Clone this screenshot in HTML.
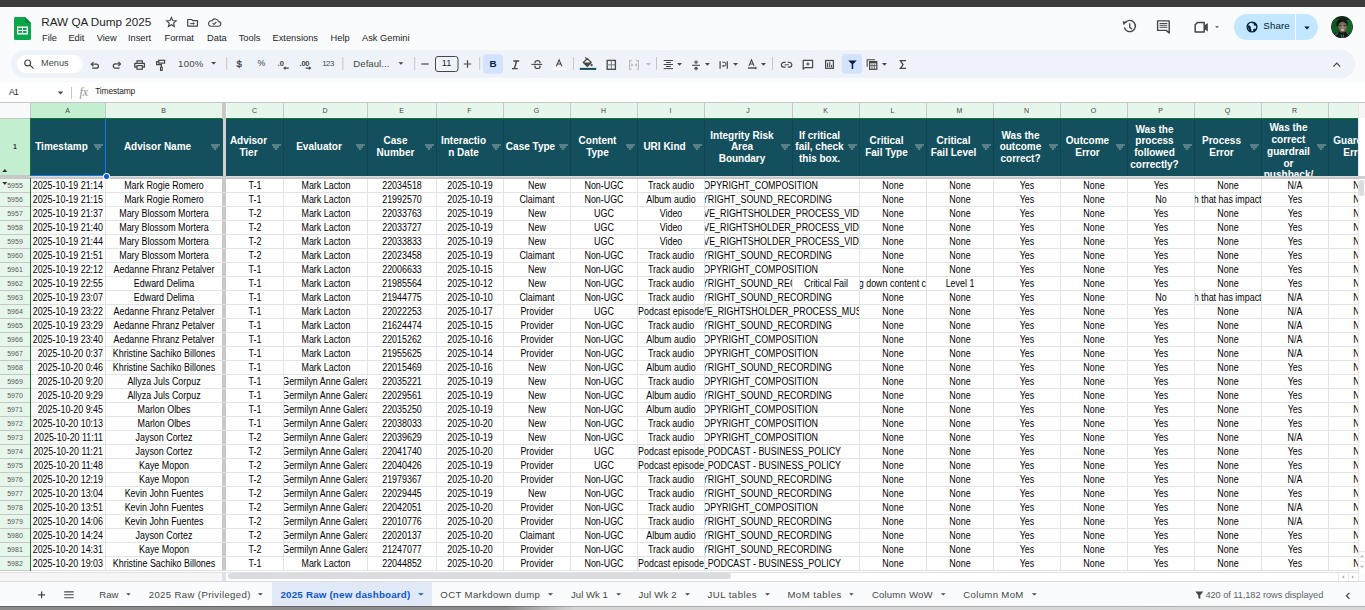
<!DOCTYPE html>
<html><head><meta charset="utf-8"><style>
html,body{margin:0;padding:0;}
body{width:1365px;height:610px;overflow:hidden;position:relative;background:#f9fbfd;font-family:"Liberation Sans", sans-serif;}
body>div,body>svg{position:absolute;}
.t{white-space:pre;}
.k{position:absolute;height:13px;overflow:hidden;}
.d{position:absolute;white-space:pre;font-size:10px;line-height:10px;color:#000;transform:scaleX(0.89);}
.d.c{width:400px;text-align:center;}
.d.r{text-align:right;transform-origin:100% 0;}
.d.l{transform-origin:0 0;}
</style></head><body>
<div style="left:0px;top:0px;width:1365px;height:7px;background:#3c3c3c;"></div><svg style="position:absolute;left:14px;top:17px" width="17" height="23" viewBox="0 0 17 23">
<path d="M1.5 0H11L17 6V21.5A1.5 1.5 0 0 1 15.5 23H1.5A1.5 1.5 0 0 1 0 21.5V1.5A1.5 1.5 0 0 1 1.5 0Z" fill="#0aa84a"/>
<path d="M11 0L17 6H12.2A1.2 1.2 0 0 1 11 4.8Z" fill="#068a3a"/>
<rect x="3" y="9.5" width="11" height="8" fill="#fff"/>
<rect x="4.4" y="10.9" width="3.6" height="2.1" fill="#0aa84a"/>
<rect x="9" y="10.9" width="3.6" height="2.1" fill="#0aa84a"/>
<rect x="4.4" y="14" width="3.6" height="2.1" fill="#0aa84a"/>
<rect x="9" y="14" width="3.6" height="2.1" fill="#0aa84a"/>
</svg><div class="t" style="left:41.3px;top:15.90px;font-size:11.7px;line-height:11.7px;color:#1f1f1f;font-weight:normal;">RAW QA Dump 2025</div><svg style="position:absolute;left:165px;top:16px" width="60" height="13" viewBox="0 0 60 13">
<path d="M6.40 1.40L7.75 4.54L11.16 4.85L8.59 7.11L9.34 10.45L6.40 8.70L3.46 10.45L4.21 7.11L1.64 4.85L5.05 4.54Z" fill="none" stroke="#444746" stroke-width="1.15" stroke-linejoin="miter"/>
<path d="M22.7 3.5H26.6L27.8 4.6H32.5V10.1H22.7Z" fill="none" stroke="#444746" stroke-width="1.2" stroke-linejoin="round"/>
<path d="M25.2 7.6H28.8" stroke="#444746" stroke-width="1.1"/>
<path d="M28.2 6.1L30 7.6L28.2 9.1Z" fill="#444746"/>
<path d="M45.6 10.2H53.4A2.3 2.3 0 0 0 53.6 5.6A3.6 3.6 0 0 0 46.9 4.9A2.7 2.7 0 0 0 45.6 10.2Z" fill="none" stroke="#444746" stroke-width="1.1"/>
<path d="M47.6 7.1L49 8.4L51.4 5.9" fill="none" stroke="#444746" stroke-width="1.1"/>
</svg><div class="t" style="left:42px;top:33.73px;font-size:9.3px;line-height:9.3px;color:#1f1f1f;font-weight:normal;">File</div><div class="t" style="left:68.4px;top:33.73px;font-size:9.3px;line-height:9.3px;color:#1f1f1f;font-weight:normal;">Edit</div><div class="t" style="left:96.7px;top:33.73px;font-size:9.3px;line-height:9.3px;color:#1f1f1f;font-weight:normal;">View</div><div class="t" style="left:127.9px;top:33.73px;font-size:9.3px;line-height:9.3px;color:#1f1f1f;font-weight:normal;">Insert</div><div class="t" style="left:164.5px;top:33.73px;font-size:9.3px;line-height:9.3px;color:#1f1f1f;font-weight:normal;">Format</div><div class="t" style="left:207px;top:33.73px;font-size:9.3px;line-height:9.3px;color:#1f1f1f;font-weight:normal;">Data</div><div class="t" style="left:238.7px;top:33.73px;font-size:9.3px;line-height:9.3px;color:#1f1f1f;font-weight:normal;">Tools</div><div class="t" style="left:272.5px;top:33.73px;font-size:9.3px;line-height:9.3px;color:#1f1f1f;font-weight:normal;">Extensions</div><div class="t" style="left:330.6px;top:33.73px;font-size:9.3px;line-height:9.3px;color:#1f1f1f;font-weight:normal;">Help</div><div class="t" style="left:362px;top:33.73px;font-size:9.3px;line-height:9.3px;color:#1f1f1f;font-weight:normal;">Ask Gemini</div><svg style="position:absolute;left:1120px;top:17px" width="110" height="20" viewBox="0 0 110 20">
<path d="M5.3 5.6A5.6 5.6 0 1 1 4.3 10.3" fill="none" stroke="#444746" stroke-width="1.4"/>
<path d="M2.6 4.2L6.9 4.8L3.6 8.2Z" fill="#444746"/>
<path d="M9.7 6.2V10.1L12 12.3" fill="none" stroke="#444746" stroke-width="1.3"/>
<path d="M37.6 3.9H49.2V16L46.2 13.4H37.6Z" fill="none" stroke="#444746" stroke-width="1.4" stroke-linejoin="round"/>
<path d="M39.5 6.5H47.3M39.5 8.3H47.3M39.5 10.3H47.3" stroke="#444746" stroke-width="1"/>
<path d="M77.4 5.6H84.2V15H75.2V7.8Z" fill="none" stroke="#444746" stroke-width="1.5" stroke-linejoin="round"/>
<path d="M84.2 8.6L87.8 5.9V14.6L84.2 12Z" fill="#444746"/>
<path d="M95 9.2H99L97 10.9Z" fill="#444746"/>
</svg><div style="left:1234px;top:14px;width:84px;height:26px;border-radius:13px;background:#c2e7ff"></div><div style="left:1295px;top:14px;width:1px;height:26px;background:#f9fbfd;"></div><svg style="position:absolute;left:1246px;top:21px" width="12" height="12" viewBox="0 0 12 12">
<circle cx="6" cy="6" r="4.9" fill="none" stroke="#001d35" stroke-width="1.3"/>
<path d="M1.6 4.4L3.4 4.6L5 6.3L4.6 7.6L5.4 8.6V11L3 9.6L2.2 6.8Z" fill="#001d35"/>
<path d="M5.6 1.2L6.6 2.6L8.2 2.8L7.6 4.4L9.6 4.6L10.6 6.4L10.8 3.6L8.8 1.6Z" fill="#001d35"/>
<path d="M7.2 8.2L9 7.4L10.4 8L8.6 10.4L7.4 10.8Z" fill="#001d35"/>
</svg><div class="t" style="left:1263.308px;top:21.10px;font-size:9.8px;line-height:9.8px;color:#001d35;font-weight:500;letter-spacing:0.058px;">Share</div><svg style="position:absolute;left:1304px;top:26px" width="6" height="4" viewBox="0 0 6 4"><path d="M0.3 0.5H5.7L3 3.5Z" fill="#001d35"/></svg><svg style="position:absolute;left:1331px;top:16px" width="22" height="22" viewBox="0 0 22 22">
<defs><clipPath id="av"><circle cx="11" cy="11" r="10.9"/></clipPath>
<radialGradient id="fg" cx="0.5" cy="0.45" r="0.6"><stop offset="0" stop-color="#a08f7e"/><stop offset="0.7" stop-color="#6e5f52"/><stop offset="1" stop-color="#3a2f28"/></radialGradient></defs>
<g clip-path="url(#av)">
<rect width="22" height="22" fill="#10241a"/>
<rect x="1" y="3" width="6.5" height="14" fill="#0e5a1e"/>
<rect x="15" y="4" width="6" height="13" fill="#0f6a24"/>
<path d="M5.5 6C6.5 2.6 15.5 2.6 16.5 6V10H5.5Z" fill="#111"/>
<ellipse cx="11.6" cy="11.4" rx="4.6" ry="5.8" fill="url(#fg)"/>
<path d="M8.4 9.6H10.8M12.4 9.6H14.8" stroke="#2a2a2a" stroke-width="0.9"/>
<path d="M10.2 13.6Q11.6 14.8 13 13.6" stroke="#e8e4dc" stroke-width="1.2" fill="none"/>
<path d="M0 22C1 18 5 16.5 11 16.5C17 16.5 21 18 22 22Z" fill="#1a1512"/>
<path d="M4 19L7 17.5M16 17.5L19 19" stroke="#3a8fa0" stroke-width="1"/>
<path d="M10 18.5L11 22M12.5 18.5L12 22" stroke="#1d8a6a" stroke-width="1"/>
</g></svg><div style="left:11px;top:50px;width:1344px;height:28px;border-radius:14px;background:#eef2f9"></div><div style="left:17px;top:55px;width:66px;height:18px;border-radius:9px;background:#fff"></div><svg style="position:absolute;left:0px;top:50px" width="920" height="28" viewBox="0 0 920 28">
<g fill="none" stroke="#444746">
<circle cx="27.7" cy="12.9" r="2.9" stroke-width="1.2"/><path d="M29.9 15.1L33.6 18.6" stroke-width="1.3"/>
<path d="M93.4 12.1L91.3 14.2L93.4 16.3" stroke-width="1.2"/><path d="M91.6 14.2H96.4A2 2 0 0 1 96.4 18.2H92.2" stroke-width="1.2"/>
<path d="M118.4 11.8L120.5 13.9L118.4 16" stroke-width="1.2"/><path d="M120.2 13.9H115.4A2.1 2.1 0 0 0 115.4 18.1H119.6" stroke-width="1.2"/>
<path d="M137 12.9V10.8H142.3V12.9" stroke-width="1.2"/><path d="M136.9 17.2H134.8V13.4H144.4V17.2H142.4" stroke-width="1.3" stroke-linejoin="round"/><rect x="137" y="15.6" width="5.3" height="3.6" stroke-width="1.2"/>
<rect x="158.7" y="10.3" width="5.9" height="2.8" stroke-width="1.2"/><path d="M158.7 11.7H156.6V14.7H161.3V17.2" stroke-width="1.2"/><rect x="160.5" y="17.4" width="1.7" height="3" stroke-width="1.1"/>
</g>
<path d="M211 12H216.2L213.6 14.6Z" fill="#444746"/>
<g fill="#c7c7c7">
<rect x="226.2" y="7" width="1" height="13"/>
<rect x="342.4" y="7" width="1" height="13"/>
<rect x="414.2" y="7" width="1" height="13"/>
<rect x="479.2" y="7" width="1" height="13"/>
<rect x="573" y="7" width="1" height="13"/>
<rect x="656" y="7" width="1" height="13"/>
<rect x="772" y="7" width="1" height="13"/>
</g>
<path d="M398.4 12.3H403.4L400.9 14.8Z" fill="#444746"/>
<path d="M421.3 14H428.7" stroke="#444746" stroke-width="1.2"/>
<rect x="435.5" y="6.5" width="22.5" height="15" rx="2.5" fill="none" stroke="#444746" stroke-width="1"/>
<path d="M463.8 14H471.2M467.5 10.3V17.7" stroke="#444746" stroke-width="1.2"/>
<rect x="483" y="4.2" width="20" height="19.6" rx="3.5" fill="#d3e3fd"/>
<rect x="842" y="4" width="20" height="19.8" rx="3.5" fill="#d3e3fd"/>
<path d="M513.4 11H519.2M512 18.6H517.6M516.6 11L514.4 18.6" stroke="#444746" stroke-width="1.4" fill="none"/>
<path d="M531.4 14.4H542.2" stroke="#444746" stroke-width="1.1"/>
<path d="M535 13.2V12.6A2.5 1.9 0 0 1 540 12.6V13.2M535 15.6V16.4A2.5 2.1 0 0 0 540 16.4V15.6" stroke="#444746" stroke-width="1.2" fill="none"/>
<path d="M556.4 16.2L559.1 9.9L561.8 16.2M557.4 14H560.8" stroke="#444746" stroke-width="1.1" fill="none"/>
<rect x="552" y="17.9" width="15" height="2" fill="#fff"/>
<path d="M585.2 7.4L587.6 9.8" stroke="#444746" stroke-width="1.1"/>
<path d="M583.3 12.5L587.3 8.5L591.3 12.5L587.3 16.5Z" fill="none" stroke="#444746" stroke-width="1.2"/>
<path d="M583.3 12.5H591.3L587.3 16.5Z" fill="#444746"/>
<circle cx="591.6" cy="15.2" r="1.1" fill="#444746"/>
<rect x="579.8" y="17.9" width="16.4" height="2" fill="#134f5c"/>
<rect x="607.2" y="10.4" width="8.2" height="8.9" fill="none" stroke="#444746" stroke-width="1.3"/>
<path d="M611.3 10.4V19.3M607.2 14.85H615.4" stroke="#777" stroke-width="1"/>
<g stroke="#b7b9bc" stroke-width="1.1" fill="none">
<path d="M631.7 10.6H629.6V19.2H631.7M636.3 10.6H638.4V19.2H636.3"/>
</g>
<path d="M631.2 13.3L633.6 15L631.2 16.7Z M637 13.3L634.6 15L637 16.7Z" fill="#b7b9bc"/>
<path d="M646 12.9H651L648.5 15.8Z" fill="#b7b9bc"/>
<g stroke="#444746" stroke-width="1">
<path d="M663.7 10.5H673M666 12.5H670.8M663.7 14.5H673M666 16.5H670.8M663.7 18.6H673"/>
</g>
<path d="M677.1 12.9H682L679.55 15.8Z" fill="#444746"/>
<path d="M692.1 15.3H700" stroke="#444746" stroke-width="1.1"/>
<path d="M696.05 10.2V12M694.3 11.6L696.05 13.3L697.8 11.6M696.05 20.4V18.6M694.3 19L696.05 17.3L697.8 19" stroke="#444746" stroke-width="1.1" fill="none"/>
<path d="M705 12.9H709.9L707.45 15.8Z" fill="#444746"/>
<g stroke="#444746" stroke-width="1.2" fill="none">
<path d="M720.1 11.2V18.8M727.3 11.2V18.8"/>
<path d="M722.2 12.2H724A1.9 1.9 0 0 1 724 16H722.9" stroke-width="1"/>
</g>
<path d="M723.6 14.8L721.9 16L723.6 17.2Z" fill="#444746"/>
<path d="M733 12.9H738.1L735.55 15.8Z" fill="#444746"/>
<g stroke="#444746" stroke-width="1.1" fill="none">
<path d="M749 15.9L751.55 10L754.1 15.9M749.9 14H753.2"/>
<path d="M748 18H755.6" stroke-width="1.4"/>
</g>
<path d="M755.2 16.4L757.2 18L755.2 19.6Z" fill="#444746"/>
<path d="M761 12.9H766L763.5 15.8Z" fill="#444746"/>
<g stroke="#444746" stroke-width="1.2" fill="none">
<path d="M785.6 12.4H783.8A2.4 2.4 0 0 0 783.8 17.2H785.6M787.8 12.4H789.4A2.4 2.4 0 0 1 789.4 17.2H787.8"/>
<path d="M784.6 14.8H788.8" stroke-width="1"/>
</g>
<g stroke="#444746" stroke-width="1.2" fill="none">
<path d="M803.2 19.2V10.4H812.6V17.6H804.8Z" stroke-linejoin="round"/>
<path d="M807.9 12.4V15.6M806.3 14H809.5"/>
<rect x="825.6" y="10.5" width="7.8" height="7.8"/>
<path d="M827.6 16.8V13.1M829.7 16.8V12.2M831.6 16.8V15.2" stroke-width="1.1" stroke-linecap="round"/>
</g>
<path d="M848.2 10.4H856.7L853.2 14V18.9H851.7V14Z" fill="#041e49"/>
<g stroke="#444746" fill="none">
<path d="M867.2 16.8V9.7H875.1" stroke-width="1.1"/>
<rect x="869.6" y="11.6" width="7.2" height="7.7" stroke-width="1.2"/>
<path d="M869.6 12.3H876.8" stroke-width="2.2"/>
<path d="M869.6 15.6H876.8M872 14V19.3M874.4 14V19.3" stroke-width="0.8"/>
</g>
<path d="M882 12.9H886.9L884.45 15.8Z" fill="#444746"/>
<path d="M905.4 11.3V10.7H900.4L903 14.8L900.4 18.3H905.4V17.7" stroke="#444746" stroke-width="1.3" fill="none"/>
</svg><div class="t" style="left:41.1px;top:59.11px;font-size:9.2px;line-height:9.2px;color:#474747;font-weight:normal;">Menus</div><div class="t" style="left:178.116px;top:59.47px;font-size:9.6px;line-height:9.6px;color:#444746;font-weight:normal;letter-spacing:0.238px;">100%</div><div class="t" style="left:236.6px;top:59.4px;font-size:9.6px;line-height:10px;color:#444746;font-weight:normal;-webkit-text-stroke:0.3px #444746">$</div><div class="t" style="left:257.6px;top:59.45px;font-size:8.8px;line-height:8.8px;color:#444746;font-weight:normal;">%</div><div class="t" style="left:353.316px;top:59.47px;font-size:9.6px;line-height:9.6px;color:#444746;font-weight:normal;letter-spacing:0.040px;">Defaul...</div><div class="t" style="left:146.60000000000002px;width:600px;text-align:center;top:59.41px;font-size:9.2px;line-height:9.2px;color:#1f1f1f;font-weight:normal;">11</div><div class="t" style="left:322.188px;top:60.30px;font-size:7.8px;line-height:7.8px;color:#444746;font-weight:normal;letter-spacing:-0.445px;">123</div><div class="t" style="left:489.6px;top:59.30px;font-size:9.8px;line-height:9.8px;color:#041e49;font-weight:bold;">B</div><svg style="position:absolute;left:270px;top:50px" width="50" height="28" viewBox="0 0 50 28">
<text x="7.6" y="15.8" font-family="Liberation Sans" font-size="7.6" fill="#444746" font-weight="bold">.0</text>
<path d="M14 18.1H18.8M15.5 16.8L14 18.1L15.5 19.4" stroke="#444746" stroke-width="1.1" fill="none"/>
<text x="29.6" y="15.8" font-family="Liberation Sans" font-size="7.6" fill="#444746" font-weight="bold" letter-spacing="-0.3">.00</text>
<path d="M35.7 18.1H40.6M39.1 16.8L40.6 18.1L39.1 19.4" stroke="#444746" stroke-width="1.1" fill="none"/>
</svg><svg style="position:absolute;left:1320px;top:50px" width="30" height="28" viewBox="0 0 30 28">
<path d="M13.4 16.6L16.8 13.2L20.2 16.6" stroke="#444746" stroke-width="1.2" fill="none"/>
</svg><div style="left:0px;top:83px;width:1365px;height:19px;background:#fff;"></div><div style="left:0px;top:102px;width:1365px;height:1px;background:#c7c7c7;"></div><div style="left:30px;top:119px;width:1328px;height:452px;background:#fff"></div><div style="left:0px;top:103px;width:30px;height:15px;background:#f8f9fa"></div><div style="left:31px;top:103px;width:74px;height:15px;background:#c4eed0"></div><div style="left:105px;top:103px;width:1px;height:15px;background:#c7c7c7"></div><div class="t" style="left:17.5px;width:100px;text-align:center;top:107.27px;font-size:7px;line-height:7px;color:#444">A</div><div style="left:106px;top:103px;width:116px;height:15px;background:#e6f6ea"></div><div style="left:222px;top:103px;width:1px;height:15px;background:#c7c7c7"></div><div class="t" style="left:113.5px;width:100px;text-align:center;top:107.27px;font-size:7px;line-height:7px;color:#444">B</div><div style="left:227px;top:103px;width:56px;height:15px;background:#e6f6ea"></div><div style="left:283px;top:103px;width:1px;height:15px;background:#c7c7c7"></div><div class="t" style="left:204.5px;width:100px;text-align:center;top:107.27px;font-size:7px;line-height:7px;color:#444">C</div><div style="left:284px;top:103px;width:83px;height:15px;background:#e6f6ea"></div><div style="left:367px;top:103px;width:1px;height:15px;background:#c7c7c7"></div><div class="t" style="left:275.0px;width:100px;text-align:center;top:107.27px;font-size:7px;line-height:7px;color:#444">D</div><div style="left:368px;top:103px;width:68px;height:15px;background:#e6f6ea"></div><div style="left:436px;top:103px;width:1px;height:15px;background:#c7c7c7"></div><div class="t" style="left:351.5px;width:100px;text-align:center;top:107.27px;font-size:7px;line-height:7px;color:#444">E</div><div style="left:437px;top:103px;width:66px;height:15px;background:#e6f6ea"></div><div style="left:503px;top:103px;width:1px;height:15px;background:#c7c7c7"></div><div class="t" style="left:419.5px;width:100px;text-align:center;top:107.27px;font-size:7px;line-height:7px;color:#444">F</div><div style="left:504px;top:103px;width:66px;height:15px;background:#e6f6ea"></div><div style="left:570px;top:103px;width:1px;height:15px;background:#c7c7c7"></div><div class="t" style="left:486.5px;width:100px;text-align:center;top:107.27px;font-size:7px;line-height:7px;color:#444">G</div><div style="left:571px;top:103px;width:66px;height:15px;background:#e6f6ea"></div><div style="left:637px;top:103px;width:1px;height:15px;background:#c7c7c7"></div><div class="t" style="left:553.5px;width:100px;text-align:center;top:107.27px;font-size:7px;line-height:7px;color:#444">H</div><div style="left:638px;top:103px;width:66px;height:15px;background:#e6f6ea"></div><div style="left:704px;top:103px;width:1px;height:15px;background:#c7c7c7"></div><div class="t" style="left:620.5px;width:100px;text-align:center;top:107.27px;font-size:7px;line-height:7px;color:#444">I</div><div style="left:705px;top:103px;width:87px;height:15px;background:#e6f6ea"></div><div style="left:792px;top:103px;width:1px;height:15px;background:#c7c7c7"></div><div class="t" style="left:698.0px;width:100px;text-align:center;top:107.27px;font-size:7px;line-height:7px;color:#444">J</div><div style="left:793px;top:103px;width:66px;height:15px;background:#e6f6ea"></div><div style="left:859px;top:103px;width:1px;height:15px;background:#c7c7c7"></div><div class="t" style="left:775.5px;width:100px;text-align:center;top:107.27px;font-size:7px;line-height:7px;color:#444">K</div><div style="left:860px;top:103px;width:66px;height:15px;background:#e6f6ea"></div><div style="left:926px;top:103px;width:1px;height:15px;background:#c7c7c7"></div><div class="t" style="left:842.5px;width:100px;text-align:center;top:107.27px;font-size:7px;line-height:7px;color:#444">L</div><div style="left:927px;top:103px;width:66px;height:15px;background:#e6f6ea"></div><div style="left:993px;top:103px;width:1px;height:15px;background:#c7c7c7"></div><div class="t" style="left:909.5px;width:100px;text-align:center;top:107.27px;font-size:7px;line-height:7px;color:#444">M</div><div style="left:994px;top:103px;width:66px;height:15px;background:#e6f6ea"></div><div style="left:1060px;top:103px;width:1px;height:15px;background:#c7c7c7"></div><div class="t" style="left:976.5px;width:100px;text-align:center;top:107.27px;font-size:7px;line-height:7px;color:#444">N</div><div style="left:1061px;top:103px;width:66px;height:15px;background:#e6f6ea"></div><div style="left:1127px;top:103px;width:1px;height:15px;background:#c7c7c7"></div><div class="t" style="left:1043.5px;width:100px;text-align:center;top:107.27px;font-size:7px;line-height:7px;color:#444">O</div><div style="left:1128px;top:103px;width:66px;height:15px;background:#e6f6ea"></div><div style="left:1194px;top:103px;width:1px;height:15px;background:#c7c7c7"></div><div class="t" style="left:1110.5px;width:100px;text-align:center;top:107.27px;font-size:7px;line-height:7px;color:#444">P</div><div style="left:1195px;top:103px;width:66px;height:15px;background:#e6f6ea"></div><div style="left:1261px;top:103px;width:1px;height:15px;background:#c7c7c7"></div><div class="t" style="left:1177.5px;width:100px;text-align:center;top:107.27px;font-size:7px;line-height:7px;color:#444">Q</div><div style="left:1262px;top:103px;width:66px;height:15px;background:#e6f6ea"></div><div style="left:1328px;top:103px;width:1px;height:15px;background:#c7c7c7"></div><div class="t" style="left:1244.5px;width:100px;text-align:center;top:107.27px;font-size:7px;line-height:7px;color:#444">R</div><div style="left:1329px;top:103px;width:29px;height:15px;background:#e6f6ea"></div><div style="left:0px;top:118px;width:30px;height:1px;background:#c7c7c7"></div><div style="left:30px;top:118px;width:1328px;height:1px;background:#137333"></div><div style="left:30px;top:103px;width:1px;height:15px;background:#c7c7c7"></div><div style="left:0px;top:119px;width:30px;height:57px;background:#c4eed0"></div><div style="left:0px;top:179px;width:30px;height:391px;background:#e6f6ea"></div><div class="t" style="left:0px;width:30px;text-align:center;top:143.07px;font-size:7px;line-height:7px;color:#333;font-weight:bold">1</div><svg style="position:absolute;left:2px;top:168px" width="6" height="5" viewBox="0 0 6 5"><path d="M0.3 4H5.3L2.8 1Z" fill="#333"/></svg><svg style="position:absolute;left:2px;top:181px" width="6" height="5" viewBox="0 0 6 5"><path d="M0.3 1H5.3L2.8 4Z" fill="#333"/></svg><div style="left:31px;top:119px;width:1327px;height:57px;background:#134f5c"></div><div class="t" style="left:-38.50px;width:200px;text-align:center;top:142.44px;font-size:10px;line-height:10px;color:#fff;font-weight:bold">Timestamp</div><svg style="position:absolute;left:94px;top:144px" width="9" height="6" viewBox="0 0 9 6"><path d="M0 0H9V2H7V4H5.3V6H2.7V4H1V2H0Z" fill="#5a8087"/></svg><div class="t" style="left:57.50px;width:200px;text-align:center;top:142.44px;font-size:10px;line-height:10px;color:#fff;font-weight:bold">Advisor Name</div><svg style="position:absolute;left:211px;top:144px" width="9" height="6" viewBox="0 0 9 6"><path d="M0 0H9V2H7V4H5.3V6H2.7V4H1V2H0Z" fill="#5a8087"/></svg><div class="t" style="left:148.50px;width:200px;text-align:center;top:136.49px;font-size:10px;line-height:10px;color:#fff;font-weight:bold">Advisor</div><div class="t" style="left:148.50px;width:200px;text-align:center;top:148.39px;font-size:10px;line-height:10px;color:#fff;font-weight:bold">Tier</div><svg style="position:absolute;left:272px;top:144px" width="9" height="6" viewBox="0 0 9 6"><path d="M0 0H9V2H7V4H5.3V6H2.7V4H1V2H0Z" fill="#5a8087"/></svg><div class="t" style="left:219.00px;width:200px;text-align:center;top:142.44px;font-size:10px;line-height:10px;color:#fff;font-weight:bold">Evaluator</div><svg style="position:absolute;left:356px;top:144px" width="9" height="6" viewBox="0 0 9 6"><path d="M0 0H9V2H7V4H5.3V6H2.7V4H1V2H0Z" fill="#5a8087"/></svg><div class="t" style="left:295.50px;width:200px;text-align:center;top:136.49px;font-size:10px;line-height:10px;color:#fff;font-weight:bold">Case</div><div class="t" style="left:295.50px;width:200px;text-align:center;top:148.39px;font-size:10px;line-height:10px;color:#fff;font-weight:bold">Number</div><svg style="position:absolute;left:425px;top:144px" width="9" height="6" viewBox="0 0 9 6"><path d="M0 0H9V2H7V4H5.3V6H2.7V4H1V2H0Z" fill="#5a8087"/></svg><div class="t" style="left:363.50px;width:200px;text-align:center;top:136.49px;font-size:10px;line-height:10px;color:#fff;font-weight:bold">Interactio</div><div class="t" style="left:363.50px;width:200px;text-align:center;top:148.39px;font-size:10px;line-height:10px;color:#fff;font-weight:bold">n Date</div><svg style="position:absolute;left:492px;top:144px" width="9" height="6" viewBox="0 0 9 6"><path d="M0 0H9V2H7V4H5.3V6H2.7V4H1V2H0Z" fill="#5a8087"/></svg><div class="t" style="left:430.50px;width:200px;text-align:center;top:142.44px;font-size:10px;line-height:10px;color:#fff;font-weight:bold">Case Type</div><svg style="position:absolute;left:559px;top:144px" width="9" height="6" viewBox="0 0 9 6"><path d="M0 0H9V2H7V4H5.3V6H2.7V4H1V2H0Z" fill="#5a8087"/></svg><div class="t" style="left:497.50px;width:200px;text-align:center;top:136.49px;font-size:10px;line-height:10px;color:#fff;font-weight:bold">Content</div><div class="t" style="left:497.50px;width:200px;text-align:center;top:148.39px;font-size:10px;line-height:10px;color:#fff;font-weight:bold">Type</div><svg style="position:absolute;left:626px;top:144px" width="9" height="6" viewBox="0 0 9 6"><path d="M0 0H9V2H7V4H5.3V6H2.7V4H1V2H0Z" fill="#5a8087"/></svg><div class="t" style="left:564.50px;width:200px;text-align:center;top:142.44px;font-size:10px;line-height:10px;color:#fff;font-weight:bold">URI Kind</div><svg style="position:absolute;left:693px;top:144px" width="9" height="6" viewBox="0 0 9 6"><path d="M0 0H9V2H7V4H5.3V6H2.7V4H1V2H0Z" fill="#5a8087"/></svg><div class="t" style="left:642.00px;width:200px;text-align:center;top:130.53px;font-size:10px;line-height:10px;color:#fff;font-weight:bold">Integrity Risk</div><div class="t" style="left:642.00px;width:200px;text-align:center;top:142.44px;font-size:10px;line-height:10px;color:#fff;font-weight:bold">Area</div><div class="t" style="left:642.00px;width:200px;text-align:center;top:154.34px;font-size:10px;line-height:10px;color:#fff;font-weight:bold">Boundary</div><svg style="position:absolute;left:781px;top:144px" width="9" height="6" viewBox="0 0 9 6"><path d="M0 0H9V2H7V4H5.3V6H2.7V4H1V2H0Z" fill="#5a8087"/></svg><div class="t" style="left:719.50px;width:200px;text-align:center;top:130.53px;font-size:10px;line-height:10px;color:#fff;font-weight:bold">If critical</div><div class="t" style="left:719.50px;width:200px;text-align:center;top:142.44px;font-size:10px;line-height:10px;color:#fff;font-weight:bold">fail, check</div><div class="t" style="left:719.50px;width:200px;text-align:center;top:154.34px;font-size:10px;line-height:10px;color:#fff;font-weight:bold">this box.</div><svg style="position:absolute;left:848px;top:144px" width="9" height="6" viewBox="0 0 9 6"><path d="M0 0H9V2H7V4H5.3V6H2.7V4H1V2H0Z" fill="#5a8087"/></svg><div class="t" style="left:786.50px;width:200px;text-align:center;top:136.49px;font-size:10px;line-height:10px;color:#fff;font-weight:bold">Critical</div><div class="t" style="left:786.50px;width:200px;text-align:center;top:148.39px;font-size:10px;line-height:10px;color:#fff;font-weight:bold">Fail Type</div><svg style="position:absolute;left:915px;top:144px" width="9" height="6" viewBox="0 0 9 6"><path d="M0 0H9V2H7V4H5.3V6H2.7V4H1V2H0Z" fill="#5a8087"/></svg><div class="t" style="left:853.50px;width:200px;text-align:center;top:136.49px;font-size:10px;line-height:10px;color:#fff;font-weight:bold">Critical</div><div class="t" style="left:853.50px;width:200px;text-align:center;top:148.39px;font-size:10px;line-height:10px;color:#fff;font-weight:bold">Fail Level</div><svg style="position:absolute;left:982px;top:144px" width="9" height="6" viewBox="0 0 9 6"><path d="M0 0H9V2H7V4H5.3V6H2.7V4H1V2H0Z" fill="#5a8087"/></svg><div class="t" style="left:920.50px;width:200px;text-align:center;top:130.53px;font-size:10px;line-height:10px;color:#fff;font-weight:bold">Was the</div><div class="t" style="left:920.50px;width:200px;text-align:center;top:142.44px;font-size:10px;line-height:10px;color:#fff;font-weight:bold">outcome</div><div class="t" style="left:920.50px;width:200px;text-align:center;top:154.34px;font-size:10px;line-height:10px;color:#fff;font-weight:bold">correct?</div><svg style="position:absolute;left:1049px;top:144px" width="9" height="6" viewBox="0 0 9 6"><path d="M0 0H9V2H7V4H5.3V6H2.7V4H1V2H0Z" fill="#5a8087"/></svg><div class="t" style="left:987.50px;width:200px;text-align:center;top:136.49px;font-size:10px;line-height:10px;color:#fff;font-weight:bold">Outcome</div><div class="t" style="left:987.50px;width:200px;text-align:center;top:148.39px;font-size:10px;line-height:10px;color:#fff;font-weight:bold">Error</div><svg style="position:absolute;left:1116px;top:144px" width="9" height="6" viewBox="0 0 9 6"><path d="M0 0H9V2H7V4H5.3V6H2.7V4H1V2H0Z" fill="#5a8087"/></svg><div class="t" style="left:1054.50px;width:200px;text-align:center;top:124.59px;font-size:10px;line-height:10px;color:#fff;font-weight:bold">Was the</div><div class="t" style="left:1054.50px;width:200px;text-align:center;top:136.49px;font-size:10px;line-height:10px;color:#fff;font-weight:bold">process</div><div class="t" style="left:1054.50px;width:200px;text-align:center;top:148.39px;font-size:10px;line-height:10px;color:#fff;font-weight:bold">followed</div><div class="t" style="left:1054.50px;width:200px;text-align:center;top:160.28px;font-size:10px;line-height:10px;color:#fff;font-weight:bold">correctly?</div><svg style="position:absolute;left:1183px;top:144px" width="9" height="6" viewBox="0 0 9 6"><path d="M0 0H9V2H7V4H5.3V6H2.7V4H1V2H0Z" fill="#5a8087"/></svg><div class="t" style="left:1121.50px;width:200px;text-align:center;top:136.49px;font-size:10px;line-height:10px;color:#fff;font-weight:bold">Process</div><div class="t" style="left:1121.50px;width:200px;text-align:center;top:148.39px;font-size:10px;line-height:10px;color:#fff;font-weight:bold">Error</div><svg style="position:absolute;left:1250px;top:144px" width="9" height="6" viewBox="0 0 9 6"><path d="M0 0H9V2H7V4H5.3V6H2.7V4H1V2H0Z" fill="#5a8087"/></svg><div class="t" style="left:1188.50px;width:200px;text-align:center;top:122.83px;font-size:10px;line-height:10px;color:#fff;font-weight:bold">Was the</div><div class="t" style="left:1188.50px;width:200px;text-align:center;top:134.73px;font-size:10px;line-height:10px;color:#fff;font-weight:bold">correct</div><div class="t" style="left:1188.50px;width:200px;text-align:center;top:146.63px;font-size:10px;line-height:10px;color:#fff;font-weight:bold">guardrail</div><div class="t" style="left:1188.50px;width:200px;text-align:center;top:158.53px;font-size:10px;line-height:10px;color:#fff;font-weight:bold">or</div><div class="t" style="left:1188.50px;width:200px;text-align:center;top:170.43px;font-size:10px;line-height:10px;color:#fff;font-weight:bold">pushback/</div><div class="t" style="left:1188.50px;width:200px;text-align:center;top:182.33px;font-size:10px;line-height:10px;color:#fff;font-weight:bold">escalation</div><svg style="position:absolute;left:1317px;top:144px" width="9" height="6" viewBox="0 0 9 6"><path d="M0 0H9V2H7V4H5.3V6H2.7V4H1V2H0Z" fill="#5a8087"/></svg><div class="t" style="left:1255.50px;width:200px;text-align:center;top:136.49px;font-size:10px;line-height:10px;color:#fff;font-weight:bold">Guardrail</div><div class="t" style="left:1255.50px;width:200px;text-align:center;top:148.39px;font-size:10px;line-height:10px;color:#fff;font-weight:bold">Error</div><div style="left:31px;top:103px;width:1358px;height:0px"></div><div style="left:1358px;top:103px;width:7px;height:470px;background:#fff"></div><div style="left:0px;top:176px;width:1365px;height:0px"></div><div style="left:0px;top:175px;width:30px;height:4px;background:#c8c8c8"></div><div style="left:30px;top:176px;width:1328px;height:1px;background:#dcdcdc"></div><div style="left:30px;top:177px;width:1328px;height:2px;background:#c8c8c8"></div><div style="left:222px;top:103px;width:4px;height:470px;background:#c8c8c8"></div><div style="left:222px;top:119px;width:1px;height:57px;background:#134f5c"></div><div style="left:223px;top:119px;width:3px;height:57px;background:#d0d0d0"></div><div class="t" style="left:0px;width:30px;text-align:center;top:182.07px;font-size:7px;line-height:7px;color:#5a5a5a">5955</div><div style="left:0px;top:192px;width:30px;height:1px;background:#c7c7c7"></div><div style="left:31px;top:192px;width:1327px;height:1px;background:#e2e3e3"></div><div class="k" style="left:31px;top:179px;width:74px"><div class="d r" style="left:-327.6px;width:400px;top:2.04px">2025-10-19 21:14</div></div><div class="k" style="left:106px;top:179px;width:116px"><div class="d c" style="left:-142.00px;top:2.04px">Mark Rogie Romero</div></div><div class="k" style="left:227px;top:179px;width:56px"><div class="d c" style="left:-172.00px;top:2.04px">T-1</div></div><div class="k" style="left:284px;top:179px;width:83px"><div class="d c" style="left:-158.50px;top:2.04px">Mark Lacton</div></div><div class="k" style="left:368px;top:179px;width:68px"><div class="d c" style="left:-166.00px;top:2.04px">22034518</div></div><div class="k" style="left:437px;top:179px;width:66px"><div class="d c" style="left:-167.00px;top:2.04px">2025-10-19</div></div><div class="k" style="left:504px;top:179px;width:66px"><div class="d c" style="left:-167.00px;top:2.04px">New</div></div><div class="k" style="left:571px;top:179px;width:66px"><div class="d c" style="left:-167.00px;top:2.04px">Non-UGC</div></div><div class="k" style="left:638px;top:179px;width:66px"><div class="d c" style="left:-167.00px;top:2.04px">Track audio</div></div><div class="k" style="left:860px;top:179px;width:66px"><div class="d c" style="left:-167.00px;top:2.04px">None</div></div><div class="k" style="left:927px;top:179px;width:66px"><div class="d c" style="left:-167.00px;top:2.04px">None</div></div><div class="k" style="left:994px;top:179px;width:66px"><div class="d c" style="left:-167.00px;top:2.04px">Yes</div></div><div class="k" style="left:1061px;top:179px;width:66px"><div class="d c" style="left:-167.00px;top:2.04px">None</div></div><div class="k" style="left:1128px;top:179px;width:66px"><div class="d c" style="left:-167.00px;top:2.04px">Yes</div></div><div class="k" style="left:1195px;top:179px;width:66px"><div class="d c" style="left:-167.00px;top:2.04px">None</div></div><div class="k" style="left:1262px;top:179px;width:66px"><div class="d c" style="left:-167.00px;top:2.04px">N/A</div></div><div class="k" style="left:1329px;top:179px;width:29px"><div class="d c" style="left:-165.50px;top:2.04px">None</div></div><div class="t" style="left:0px;width:30px;text-align:center;top:196.07px;font-size:7px;line-height:7px;color:#5a5a5a">5956</div><div style="left:0px;top:206px;width:30px;height:1px;background:#c7c7c7"></div><div style="left:31px;top:206px;width:1327px;height:1px;background:#e2e3e3"></div><div class="k" style="left:31px;top:193px;width:74px"><div class="d r" style="left:-327.6px;width:400px;top:2.04px">2025-10-19 21:15</div></div><div class="k" style="left:106px;top:193px;width:116px"><div class="d c" style="left:-142.00px;top:2.04px">Mark Rogie Romero</div></div><div class="k" style="left:227px;top:193px;width:56px"><div class="d c" style="left:-172.00px;top:2.04px">T-1</div></div><div class="k" style="left:284px;top:193px;width:83px"><div class="d c" style="left:-158.50px;top:2.04px">Mark Lacton</div></div><div class="k" style="left:368px;top:193px;width:68px"><div class="d c" style="left:-166.00px;top:2.04px">21992570</div></div><div class="k" style="left:437px;top:193px;width:66px"><div class="d c" style="left:-167.00px;top:2.04px">2025-10-19</div></div><div class="k" style="left:504px;top:193px;width:66px"><div class="d c" style="left:-167.00px;top:2.04px">Claimant</div></div><div class="k" style="left:571px;top:193px;width:66px"><div class="d c" style="left:-167.00px;top:2.04px">Non-UGC</div></div><div class="k" style="left:638px;top:193px;width:66px"><div class="d c" style="left:-167.00px;top:2.04px">Album audio</div></div><div class="k" style="left:860px;top:193px;width:66px"><div class="d c" style="left:-167.00px;top:2.04px">None</div></div><div class="k" style="left:927px;top:193px;width:66px"><div class="d c" style="left:-167.00px;top:2.04px">None</div></div><div class="k" style="left:994px;top:193px;width:66px"><div class="d c" style="left:-167.00px;top:2.04px">Yes</div></div><div class="k" style="left:1061px;top:193px;width:66px"><div class="d c" style="left:-167.00px;top:2.04px">None</div></div><div class="k" style="left:1128px;top:193px;width:66px"><div class="d c" style="left:-167.00px;top:2.04px">No</div></div><div class="k" style="left:1195px;top:193px;width:66px"><div class="d l" style="left:-18.80px;top:2.04px">which that has impacted</div></div><div class="k" style="left:1262px;top:193px;width:66px"><div class="d c" style="left:-167.00px;top:2.04px">Yes</div></div><div class="k" style="left:1329px;top:193px;width:29px"><div class="d c" style="left:-165.50px;top:2.04px">None</div></div><div class="t" style="left:0px;width:30px;text-align:center;top:210.07px;font-size:7px;line-height:7px;color:#5a5a5a">5957</div><div style="left:0px;top:220px;width:30px;height:1px;background:#c7c7c7"></div><div style="left:31px;top:220px;width:1327px;height:1px;background:#e2e3e3"></div><div class="k" style="left:31px;top:207px;width:74px"><div class="d r" style="left:-327.6px;width:400px;top:2.04px">2025-10-19 21:37</div></div><div class="k" style="left:106px;top:207px;width:116px"><div class="d c" style="left:-142.00px;top:2.04px">Mary Blossom Mortera</div></div><div class="k" style="left:227px;top:207px;width:56px"><div class="d c" style="left:-172.00px;top:2.04px">T-2</div></div><div class="k" style="left:284px;top:207px;width:83px"><div class="d c" style="left:-158.50px;top:2.04px">Mark Lacton</div></div><div class="k" style="left:368px;top:207px;width:68px"><div class="d c" style="left:-166.00px;top:2.04px">22033763</div></div><div class="k" style="left:437px;top:207px;width:66px"><div class="d c" style="left:-167.00px;top:2.04px">2025-10-19</div></div><div class="k" style="left:504px;top:207px;width:66px"><div class="d c" style="left:-167.00px;top:2.04px">New</div></div><div class="k" style="left:571px;top:207px;width:66px"><div class="d c" style="left:-167.00px;top:2.04px">UGC</div></div><div class="k" style="left:638px;top:207px;width:66px"><div class="d c" style="left:-167.00px;top:2.04px">Video</div></div><div class="k" style="left:860px;top:207px;width:66px"><div class="d c" style="left:-167.00px;top:2.04px">None</div></div><div class="k" style="left:927px;top:207px;width:66px"><div class="d c" style="left:-167.00px;top:2.04px">None</div></div><div class="k" style="left:994px;top:207px;width:66px"><div class="d c" style="left:-167.00px;top:2.04px">Yes</div></div><div class="k" style="left:1061px;top:207px;width:66px"><div class="d c" style="left:-167.00px;top:2.04px">None</div></div><div class="k" style="left:1128px;top:207px;width:66px"><div class="d c" style="left:-167.00px;top:2.04px">Yes</div></div><div class="k" style="left:1195px;top:207px;width:66px"><div class="d c" style="left:-167.00px;top:2.04px">None</div></div><div class="k" style="left:1262px;top:207px;width:66px"><div class="d c" style="left:-167.00px;top:2.04px">Yes</div></div><div class="k" style="left:1329px;top:207px;width:29px"><div class="d c" style="left:-165.50px;top:2.04px">None</div></div><div class="t" style="left:0px;width:30px;text-align:center;top:224.07px;font-size:7px;line-height:7px;color:#5a5a5a">5958</div><div style="left:0px;top:234px;width:30px;height:1px;background:#c7c7c7"></div><div style="left:31px;top:234px;width:1327px;height:1px;background:#e2e3e3"></div><div class="k" style="left:31px;top:221px;width:74px"><div class="d r" style="left:-327.6px;width:400px;top:2.04px">2025-10-19 21:40</div></div><div class="k" style="left:106px;top:221px;width:116px"><div class="d c" style="left:-142.00px;top:2.04px">Mary Blossom Mortera</div></div><div class="k" style="left:227px;top:221px;width:56px"><div class="d c" style="left:-172.00px;top:2.04px">T-2</div></div><div class="k" style="left:284px;top:221px;width:83px"><div class="d c" style="left:-158.50px;top:2.04px">Mark Lacton</div></div><div class="k" style="left:368px;top:221px;width:68px"><div class="d c" style="left:-166.00px;top:2.04px">22033727</div></div><div class="k" style="left:437px;top:221px;width:66px"><div class="d c" style="left:-167.00px;top:2.04px">2025-10-19</div></div><div class="k" style="left:504px;top:221px;width:66px"><div class="d c" style="left:-167.00px;top:2.04px">New</div></div><div class="k" style="left:571px;top:221px;width:66px"><div class="d c" style="left:-167.00px;top:2.04px">UGC</div></div><div class="k" style="left:638px;top:221px;width:66px"><div class="d c" style="left:-167.00px;top:2.04px">Video</div></div><div class="k" style="left:860px;top:221px;width:66px"><div class="d c" style="left:-167.00px;top:2.04px">None</div></div><div class="k" style="left:927px;top:221px;width:66px"><div class="d c" style="left:-167.00px;top:2.04px">None</div></div><div class="k" style="left:994px;top:221px;width:66px"><div class="d c" style="left:-167.00px;top:2.04px">Yes</div></div><div class="k" style="left:1061px;top:221px;width:66px"><div class="d c" style="left:-167.00px;top:2.04px">None</div></div><div class="k" style="left:1128px;top:221px;width:66px"><div class="d c" style="left:-167.00px;top:2.04px">Yes</div></div><div class="k" style="left:1195px;top:221px;width:66px"><div class="d c" style="left:-167.00px;top:2.04px">None</div></div><div class="k" style="left:1262px;top:221px;width:66px"><div class="d c" style="left:-167.00px;top:2.04px">Yes</div></div><div class="k" style="left:1329px;top:221px;width:29px"><div class="d c" style="left:-165.50px;top:2.04px">None</div></div><div class="t" style="left:0px;width:30px;text-align:center;top:238.07px;font-size:7px;line-height:7px;color:#5a5a5a">5959</div><div style="left:0px;top:248px;width:30px;height:1px;background:#c7c7c7"></div><div style="left:31px;top:248px;width:1327px;height:1px;background:#e2e3e3"></div><div class="k" style="left:31px;top:235px;width:74px"><div class="d r" style="left:-327.6px;width:400px;top:2.04px">2025-10-19 21:44</div></div><div class="k" style="left:106px;top:235px;width:116px"><div class="d c" style="left:-142.00px;top:2.04px">Mary Blossom Mortera</div></div><div class="k" style="left:227px;top:235px;width:56px"><div class="d c" style="left:-172.00px;top:2.04px">T-2</div></div><div class="k" style="left:284px;top:235px;width:83px"><div class="d c" style="left:-158.50px;top:2.04px">Mark Lacton</div></div><div class="k" style="left:368px;top:235px;width:68px"><div class="d c" style="left:-166.00px;top:2.04px">22033833</div></div><div class="k" style="left:437px;top:235px;width:66px"><div class="d c" style="left:-167.00px;top:2.04px">2025-10-19</div></div><div class="k" style="left:504px;top:235px;width:66px"><div class="d c" style="left:-167.00px;top:2.04px">New</div></div><div class="k" style="left:571px;top:235px;width:66px"><div class="d c" style="left:-167.00px;top:2.04px">UGC</div></div><div class="k" style="left:638px;top:235px;width:66px"><div class="d c" style="left:-167.00px;top:2.04px">Video</div></div><div class="k" style="left:860px;top:235px;width:66px"><div class="d c" style="left:-167.00px;top:2.04px">None</div></div><div class="k" style="left:927px;top:235px;width:66px"><div class="d c" style="left:-167.00px;top:2.04px">None</div></div><div class="k" style="left:994px;top:235px;width:66px"><div class="d c" style="left:-167.00px;top:2.04px">Yes</div></div><div class="k" style="left:1061px;top:235px;width:66px"><div class="d c" style="left:-167.00px;top:2.04px">None</div></div><div class="k" style="left:1128px;top:235px;width:66px"><div class="d c" style="left:-167.00px;top:2.04px">Yes</div></div><div class="k" style="left:1195px;top:235px;width:66px"><div class="d c" style="left:-167.00px;top:2.04px">None</div></div><div class="k" style="left:1262px;top:235px;width:66px"><div class="d c" style="left:-167.00px;top:2.04px">Yes</div></div><div class="k" style="left:1329px;top:235px;width:29px"><div class="d c" style="left:-165.50px;top:2.04px">None</div></div><div class="t" style="left:0px;width:30px;text-align:center;top:252.07px;font-size:7px;line-height:7px;color:#5a5a5a">5960</div><div style="left:0px;top:262px;width:30px;height:1px;background:#c7c7c7"></div><div style="left:31px;top:262px;width:1327px;height:1px;background:#e2e3e3"></div><div class="k" style="left:31px;top:249px;width:74px"><div class="d r" style="left:-327.6px;width:400px;top:2.04px">2025-10-19 21:51</div></div><div class="k" style="left:106px;top:249px;width:116px"><div class="d c" style="left:-142.00px;top:2.04px">Mary Blossom Mortera</div></div><div class="k" style="left:227px;top:249px;width:56px"><div class="d c" style="left:-172.00px;top:2.04px">T-2</div></div><div class="k" style="left:284px;top:249px;width:83px"><div class="d c" style="left:-158.50px;top:2.04px">Mark Lacton</div></div><div class="k" style="left:368px;top:249px;width:68px"><div class="d c" style="left:-166.00px;top:2.04px">22023458</div></div><div class="k" style="left:437px;top:249px;width:66px"><div class="d c" style="left:-167.00px;top:2.04px">2025-10-19</div></div><div class="k" style="left:504px;top:249px;width:66px"><div class="d c" style="left:-167.00px;top:2.04px">Claimant</div></div><div class="k" style="left:571px;top:249px;width:66px"><div class="d c" style="left:-167.00px;top:2.04px">Non-UGC</div></div><div class="k" style="left:638px;top:249px;width:66px"><div class="d c" style="left:-167.00px;top:2.04px">Track audio</div></div><div class="k" style="left:860px;top:249px;width:66px"><div class="d c" style="left:-167.00px;top:2.04px">None</div></div><div class="k" style="left:927px;top:249px;width:66px"><div class="d c" style="left:-167.00px;top:2.04px">None</div></div><div class="k" style="left:994px;top:249px;width:66px"><div class="d c" style="left:-167.00px;top:2.04px">Yes</div></div><div class="k" style="left:1061px;top:249px;width:66px"><div class="d c" style="left:-167.00px;top:2.04px">None</div></div><div class="k" style="left:1128px;top:249px;width:66px"><div class="d c" style="left:-167.00px;top:2.04px">Yes</div></div><div class="k" style="left:1195px;top:249px;width:66px"><div class="d c" style="left:-167.00px;top:2.04px">None</div></div><div class="k" style="left:1262px;top:249px;width:66px"><div class="d c" style="left:-167.00px;top:2.04px">Yes</div></div><div class="k" style="left:1329px;top:249px;width:29px"><div class="d c" style="left:-165.50px;top:2.04px">None</div></div><div class="t" style="left:0px;width:30px;text-align:center;top:266.07px;font-size:7px;line-height:7px;color:#5a5a5a">5961</div><div style="left:0px;top:276px;width:30px;height:1px;background:#c7c7c7"></div><div style="left:31px;top:276px;width:1327px;height:1px;background:#e2e3e3"></div><div class="k" style="left:31px;top:263px;width:74px"><div class="d r" style="left:-327.6px;width:400px;top:2.04px">2025-10-19 22:12</div></div><div class="k" style="left:106px;top:263px;width:116px"><div class="d c" style="left:-142.00px;top:2.04px">Aedanne Fhranz Petalver</div></div><div class="k" style="left:227px;top:263px;width:56px"><div class="d c" style="left:-172.00px;top:2.04px">T-1</div></div><div class="k" style="left:284px;top:263px;width:83px"><div class="d c" style="left:-158.50px;top:2.04px">Mark Lacton</div></div><div class="k" style="left:368px;top:263px;width:68px"><div class="d c" style="left:-166.00px;top:2.04px">22006633</div></div><div class="k" style="left:437px;top:263px;width:66px"><div class="d c" style="left:-167.00px;top:2.04px">2025-10-15</div></div><div class="k" style="left:504px;top:263px;width:66px"><div class="d c" style="left:-167.00px;top:2.04px">New</div></div><div class="k" style="left:571px;top:263px;width:66px"><div class="d c" style="left:-167.00px;top:2.04px">Non-UGC</div></div><div class="k" style="left:638px;top:263px;width:66px"><div class="d c" style="left:-167.00px;top:2.04px">Track audio</div></div><div class="k" style="left:860px;top:263px;width:66px"><div class="d c" style="left:-167.00px;top:2.04px">None</div></div><div class="k" style="left:927px;top:263px;width:66px"><div class="d c" style="left:-167.00px;top:2.04px">None</div></div><div class="k" style="left:994px;top:263px;width:66px"><div class="d c" style="left:-167.00px;top:2.04px">Yes</div></div><div class="k" style="left:1061px;top:263px;width:66px"><div class="d c" style="left:-167.00px;top:2.04px">None</div></div><div class="k" style="left:1128px;top:263px;width:66px"><div class="d c" style="left:-167.00px;top:2.04px">Yes</div></div><div class="k" style="left:1195px;top:263px;width:66px"><div class="d c" style="left:-167.00px;top:2.04px">None</div></div><div class="k" style="left:1262px;top:263px;width:66px"><div class="d c" style="left:-167.00px;top:2.04px">Yes</div></div><div class="k" style="left:1329px;top:263px;width:29px"><div class="d c" style="left:-165.50px;top:2.04px">None</div></div><div class="t" style="left:0px;width:30px;text-align:center;top:280.07px;font-size:7px;line-height:7px;color:#5a5a5a">5962</div><div style="left:0px;top:290px;width:30px;height:1px;background:#c7c7c7"></div><div style="left:31px;top:290px;width:1327px;height:1px;background:#e2e3e3"></div><div class="k" style="left:31px;top:277px;width:74px"><div class="d r" style="left:-327.6px;width:400px;top:2.04px">2025-10-19 22:55</div></div><div class="k" style="left:106px;top:277px;width:116px"><div class="d c" style="left:-142.00px;top:2.04px">Edward Delima</div></div><div class="k" style="left:227px;top:277px;width:56px"><div class="d c" style="left:-172.00px;top:2.04px">T-1</div></div><div class="k" style="left:284px;top:277px;width:83px"><div class="d c" style="left:-158.50px;top:2.04px">Mark Lacton</div></div><div class="k" style="left:368px;top:277px;width:68px"><div class="d c" style="left:-166.00px;top:2.04px">21985564</div></div><div class="k" style="left:437px;top:277px;width:66px"><div class="d c" style="left:-167.00px;top:2.04px">2025-10-12</div></div><div class="k" style="left:504px;top:277px;width:66px"><div class="d c" style="left:-167.00px;top:2.04px">New</div></div><div class="k" style="left:571px;top:277px;width:66px"><div class="d c" style="left:-167.00px;top:2.04px">Non-UGC</div></div><div class="k" style="left:638px;top:277px;width:66px"><div class="d c" style="left:-167.00px;top:2.04px">Track audio</div></div><div class="k" style="left:793px;top:277px;width:66px"><div class="d c" style="left:-167.00px;top:2.04px">Critical Fail</div></div><div class="k" style="left:860px;top:277px;width:66px"><div class="d l" style="left:-22.01px;top:2.04px">pulling down content creators</div></div><div class="k" style="left:927px;top:277px;width:66px"><div class="d c" style="left:-167.00px;top:2.04px">Level 1</div></div><div class="k" style="left:994px;top:277px;width:66px"><div class="d c" style="left:-167.00px;top:2.04px">Yes</div></div><div class="k" style="left:1061px;top:277px;width:66px"><div class="d c" style="left:-167.00px;top:2.04px">None</div></div><div class="k" style="left:1128px;top:277px;width:66px"><div class="d c" style="left:-167.00px;top:2.04px">Yes</div></div><div class="k" style="left:1195px;top:277px;width:66px"><div class="d c" style="left:-167.00px;top:2.04px">None</div></div><div class="k" style="left:1262px;top:277px;width:66px"><div class="d c" style="left:-167.00px;top:2.04px">Yes</div></div><div class="k" style="left:1329px;top:277px;width:29px"><div class="d c" style="left:-165.50px;top:2.04px">None</div></div><div class="t" style="left:0px;width:30px;text-align:center;top:294.07px;font-size:7px;line-height:7px;color:#5a5a5a">5963</div><div style="left:0px;top:304px;width:30px;height:1px;background:#c7c7c7"></div><div style="left:31px;top:304px;width:1327px;height:1px;background:#e2e3e3"></div><div class="k" style="left:31px;top:291px;width:74px"><div class="d r" style="left:-327.6px;width:400px;top:2.04px">2025-10-19 23:07</div></div><div class="k" style="left:106px;top:291px;width:116px"><div class="d c" style="left:-142.00px;top:2.04px">Edward Delima</div></div><div class="k" style="left:227px;top:291px;width:56px"><div class="d c" style="left:-172.00px;top:2.04px">T-1</div></div><div class="k" style="left:284px;top:291px;width:83px"><div class="d c" style="left:-158.50px;top:2.04px">Mark Lacton</div></div><div class="k" style="left:368px;top:291px;width:68px"><div class="d c" style="left:-166.00px;top:2.04px">21944775</div></div><div class="k" style="left:437px;top:291px;width:66px"><div class="d c" style="left:-167.00px;top:2.04px">2025-10-10</div></div><div class="k" style="left:504px;top:291px;width:66px"><div class="d c" style="left:-167.00px;top:2.04px">Claimant</div></div><div class="k" style="left:571px;top:291px;width:66px"><div class="d c" style="left:-167.00px;top:2.04px">Non-UGC</div></div><div class="k" style="left:638px;top:291px;width:66px"><div class="d c" style="left:-167.00px;top:2.04px">Track audio</div></div><div class="k" style="left:860px;top:291px;width:66px"><div class="d c" style="left:-167.00px;top:2.04px">None</div></div><div class="k" style="left:927px;top:291px;width:66px"><div class="d c" style="left:-167.00px;top:2.04px">None</div></div><div class="k" style="left:994px;top:291px;width:66px"><div class="d c" style="left:-167.00px;top:2.04px">Yes</div></div><div class="k" style="left:1061px;top:291px;width:66px"><div class="d c" style="left:-167.00px;top:2.04px">None</div></div><div class="k" style="left:1128px;top:291px;width:66px"><div class="d c" style="left:-167.00px;top:2.04px">No</div></div><div class="k" style="left:1195px;top:291px;width:66px"><div class="d l" style="left:-18.80px;top:2.04px">which that has impacted</div></div><div class="k" style="left:1262px;top:291px;width:66px"><div class="d c" style="left:-167.00px;top:2.04px">N/A</div></div><div class="k" style="left:1329px;top:291px;width:29px"><div class="d c" style="left:-165.50px;top:2.04px">None</div></div><div class="t" style="left:0px;width:30px;text-align:center;top:308.07px;font-size:7px;line-height:7px;color:#5a5a5a">5964</div><div style="left:0px;top:318px;width:30px;height:1px;background:#c7c7c7"></div><div style="left:31px;top:318px;width:1327px;height:1px;background:#e2e3e3"></div><div class="k" style="left:31px;top:305px;width:74px"><div class="d r" style="left:-327.6px;width:400px;top:2.04px">2025-10-19 23:22</div></div><div class="k" style="left:106px;top:305px;width:116px"><div class="d c" style="left:-142.00px;top:2.04px">Aedanne Fhranz Petalver</div></div><div class="k" style="left:227px;top:305px;width:56px"><div class="d c" style="left:-172.00px;top:2.04px">T-1</div></div><div class="k" style="left:284px;top:305px;width:83px"><div class="d c" style="left:-158.50px;top:2.04px">Mark Lacton</div></div><div class="k" style="left:368px;top:305px;width:68px"><div class="d c" style="left:-166.00px;top:2.04px">22022253</div></div><div class="k" style="left:437px;top:305px;width:66px"><div class="d c" style="left:-167.00px;top:2.04px">2025-10-17</div></div><div class="k" style="left:504px;top:305px;width:66px"><div class="d c" style="left:-167.00px;top:2.04px">Provider</div></div><div class="k" style="left:571px;top:305px;width:66px"><div class="d c" style="left:-167.00px;top:2.04px">UGC</div></div><div class="k" style="left:638px;top:305px;width:66px"><div class="d c" style="left:-167.00px;top:2.04px">Podcast episode</div></div><div class="k" style="left:860px;top:305px;width:66px"><div class="d c" style="left:-167.00px;top:2.04px">None</div></div><div class="k" style="left:927px;top:305px;width:66px"><div class="d c" style="left:-167.00px;top:2.04px">None</div></div><div class="k" style="left:994px;top:305px;width:66px"><div class="d c" style="left:-167.00px;top:2.04px">Yes</div></div><div class="k" style="left:1061px;top:305px;width:66px"><div class="d c" style="left:-167.00px;top:2.04px">None</div></div><div class="k" style="left:1128px;top:305px;width:66px"><div class="d c" style="left:-167.00px;top:2.04px">Yes</div></div><div class="k" style="left:1195px;top:305px;width:66px"><div class="d c" style="left:-167.00px;top:2.04px">None</div></div><div class="k" style="left:1262px;top:305px;width:66px"><div class="d c" style="left:-167.00px;top:2.04px">N/A</div></div><div class="k" style="left:1329px;top:305px;width:29px"><div class="d c" style="left:-165.50px;top:2.04px">None</div></div><div class="t" style="left:0px;width:30px;text-align:center;top:322.07px;font-size:7px;line-height:7px;color:#5a5a5a">5965</div><div style="left:0px;top:332px;width:30px;height:1px;background:#c7c7c7"></div><div style="left:31px;top:332px;width:1327px;height:1px;background:#e2e3e3"></div><div class="k" style="left:31px;top:319px;width:74px"><div class="d r" style="left:-327.6px;width:400px;top:2.04px">2025-10-19 23:29</div></div><div class="k" style="left:106px;top:319px;width:116px"><div class="d c" style="left:-142.00px;top:2.04px">Aedanne Fhranz Petalver</div></div><div class="k" style="left:227px;top:319px;width:56px"><div class="d c" style="left:-172.00px;top:2.04px">T-1</div></div><div class="k" style="left:284px;top:319px;width:83px"><div class="d c" style="left:-158.50px;top:2.04px">Mark Lacton</div></div><div class="k" style="left:368px;top:319px;width:68px"><div class="d c" style="left:-166.00px;top:2.04px">21624474</div></div><div class="k" style="left:437px;top:319px;width:66px"><div class="d c" style="left:-167.00px;top:2.04px">2025-10-15</div></div><div class="k" style="left:504px;top:319px;width:66px"><div class="d c" style="left:-167.00px;top:2.04px">Provider</div></div><div class="k" style="left:571px;top:319px;width:66px"><div class="d c" style="left:-167.00px;top:2.04px">Non-UGC</div></div><div class="k" style="left:638px;top:319px;width:66px"><div class="d c" style="left:-167.00px;top:2.04px">Track audio</div></div><div class="k" style="left:860px;top:319px;width:66px"><div class="d c" style="left:-167.00px;top:2.04px">None</div></div><div class="k" style="left:927px;top:319px;width:66px"><div class="d c" style="left:-167.00px;top:2.04px">None</div></div><div class="k" style="left:994px;top:319px;width:66px"><div class="d c" style="left:-167.00px;top:2.04px">Yes</div></div><div class="k" style="left:1061px;top:319px;width:66px"><div class="d c" style="left:-167.00px;top:2.04px">None</div></div><div class="k" style="left:1128px;top:319px;width:66px"><div class="d c" style="left:-167.00px;top:2.04px">Yes</div></div><div class="k" style="left:1195px;top:319px;width:66px"><div class="d c" style="left:-167.00px;top:2.04px">None</div></div><div class="k" style="left:1262px;top:319px;width:66px"><div class="d c" style="left:-167.00px;top:2.04px">N/A</div></div><div class="k" style="left:1329px;top:319px;width:29px"><div class="d c" style="left:-165.50px;top:2.04px">None</div></div><div class="t" style="left:0px;width:30px;text-align:center;top:336.07px;font-size:7px;line-height:7px;color:#5a5a5a">5966</div><div style="left:0px;top:346px;width:30px;height:1px;background:#c7c7c7"></div><div style="left:31px;top:346px;width:1327px;height:1px;background:#e2e3e3"></div><div class="k" style="left:31px;top:333px;width:74px"><div class="d r" style="left:-327.6px;width:400px;top:2.04px">2025-10-19 23:40</div></div><div class="k" style="left:106px;top:333px;width:116px"><div class="d c" style="left:-142.00px;top:2.04px">Aedanne Fhranz Petalver</div></div><div class="k" style="left:227px;top:333px;width:56px"><div class="d c" style="left:-172.00px;top:2.04px">T-1</div></div><div class="k" style="left:284px;top:333px;width:83px"><div class="d c" style="left:-158.50px;top:2.04px">Mark Lacton</div></div><div class="k" style="left:368px;top:333px;width:68px"><div class="d c" style="left:-166.00px;top:2.04px">22015262</div></div><div class="k" style="left:437px;top:333px;width:66px"><div class="d c" style="left:-167.00px;top:2.04px">2025-10-16</div></div><div class="k" style="left:504px;top:333px;width:66px"><div class="d c" style="left:-167.00px;top:2.04px">Provider</div></div><div class="k" style="left:571px;top:333px;width:66px"><div class="d c" style="left:-167.00px;top:2.04px">Non-UGC</div></div><div class="k" style="left:638px;top:333px;width:66px"><div class="d c" style="left:-167.00px;top:2.04px">Album audio</div></div><div class="k" style="left:860px;top:333px;width:66px"><div class="d c" style="left:-167.00px;top:2.04px">None</div></div><div class="k" style="left:927px;top:333px;width:66px"><div class="d c" style="left:-167.00px;top:2.04px">None</div></div><div class="k" style="left:994px;top:333px;width:66px"><div class="d c" style="left:-167.00px;top:2.04px">Yes</div></div><div class="k" style="left:1061px;top:333px;width:66px"><div class="d c" style="left:-167.00px;top:2.04px">None</div></div><div class="k" style="left:1128px;top:333px;width:66px"><div class="d c" style="left:-167.00px;top:2.04px">Yes</div></div><div class="k" style="left:1195px;top:333px;width:66px"><div class="d c" style="left:-167.00px;top:2.04px">None</div></div><div class="k" style="left:1262px;top:333px;width:66px"><div class="d c" style="left:-167.00px;top:2.04px">N/A</div></div><div class="k" style="left:1329px;top:333px;width:29px"><div class="d c" style="left:-165.50px;top:2.04px">None</div></div><div class="t" style="left:0px;width:30px;text-align:center;top:350.07px;font-size:7px;line-height:7px;color:#5a5a5a">5967</div><div style="left:0px;top:360px;width:30px;height:1px;background:#c7c7c7"></div><div style="left:31px;top:360px;width:1327px;height:1px;background:#e2e3e3"></div><div class="k" style="left:31px;top:347px;width:74px"><div class="d r" style="left:-327.6px;width:400px;top:2.04px">2025-10-20 0:37</div></div><div class="k" style="left:106px;top:347px;width:116px"><div class="d c" style="left:-142.00px;top:2.04px">Khristine Sachiko Billones</div></div><div class="k" style="left:227px;top:347px;width:56px"><div class="d c" style="left:-172.00px;top:2.04px">T-1</div></div><div class="k" style="left:284px;top:347px;width:83px"><div class="d c" style="left:-158.50px;top:2.04px">Mark Lacton</div></div><div class="k" style="left:368px;top:347px;width:68px"><div class="d c" style="left:-166.00px;top:2.04px">21955625</div></div><div class="k" style="left:437px;top:347px;width:66px"><div class="d c" style="left:-167.00px;top:2.04px">2025-10-14</div></div><div class="k" style="left:504px;top:347px;width:66px"><div class="d c" style="left:-167.00px;top:2.04px">Provider</div></div><div class="k" style="left:571px;top:347px;width:66px"><div class="d c" style="left:-167.00px;top:2.04px">Non-UGC</div></div><div class="k" style="left:638px;top:347px;width:66px"><div class="d c" style="left:-167.00px;top:2.04px">Track audio</div></div><div class="k" style="left:860px;top:347px;width:66px"><div class="d c" style="left:-167.00px;top:2.04px">None</div></div><div class="k" style="left:927px;top:347px;width:66px"><div class="d c" style="left:-167.00px;top:2.04px">None</div></div><div class="k" style="left:994px;top:347px;width:66px"><div class="d c" style="left:-167.00px;top:2.04px">Yes</div></div><div class="k" style="left:1061px;top:347px;width:66px"><div class="d c" style="left:-167.00px;top:2.04px">None</div></div><div class="k" style="left:1128px;top:347px;width:66px"><div class="d c" style="left:-167.00px;top:2.04px">Yes</div></div><div class="k" style="left:1195px;top:347px;width:66px"><div class="d c" style="left:-167.00px;top:2.04px">None</div></div><div class="k" style="left:1262px;top:347px;width:66px"><div class="d c" style="left:-167.00px;top:2.04px">N/A</div></div><div class="k" style="left:1329px;top:347px;width:29px"><div class="d c" style="left:-165.50px;top:2.04px">None</div></div><div class="t" style="left:0px;width:30px;text-align:center;top:364.07px;font-size:7px;line-height:7px;color:#5a5a5a">5968</div><div style="left:0px;top:374px;width:30px;height:1px;background:#c7c7c7"></div><div style="left:31px;top:374px;width:1327px;height:1px;background:#e2e3e3"></div><div class="k" style="left:31px;top:361px;width:74px"><div class="d r" style="left:-327.6px;width:400px;top:2.04px">2025-10-20 0:46</div></div><div class="k" style="left:106px;top:361px;width:116px"><div class="d c" style="left:-142.00px;top:2.04px">Khristine Sachiko Billones</div></div><div class="k" style="left:227px;top:361px;width:56px"><div class="d c" style="left:-172.00px;top:2.04px">T-1</div></div><div class="k" style="left:284px;top:361px;width:83px"><div class="d c" style="left:-158.50px;top:2.04px">Mark Lacton</div></div><div class="k" style="left:368px;top:361px;width:68px"><div class="d c" style="left:-166.00px;top:2.04px">22015469</div></div><div class="k" style="left:437px;top:361px;width:66px"><div class="d c" style="left:-167.00px;top:2.04px">2025-10-16</div></div><div class="k" style="left:504px;top:361px;width:66px"><div class="d c" style="left:-167.00px;top:2.04px">New</div></div><div class="k" style="left:571px;top:361px;width:66px"><div class="d c" style="left:-167.00px;top:2.04px">Non-UGC</div></div><div class="k" style="left:638px;top:361px;width:66px"><div class="d c" style="left:-167.00px;top:2.04px">Album audio</div></div><div class="k" style="left:860px;top:361px;width:66px"><div class="d c" style="left:-167.00px;top:2.04px">None</div></div><div class="k" style="left:927px;top:361px;width:66px"><div class="d c" style="left:-167.00px;top:2.04px">None</div></div><div class="k" style="left:994px;top:361px;width:66px"><div class="d c" style="left:-167.00px;top:2.04px">Yes</div></div><div class="k" style="left:1061px;top:361px;width:66px"><div class="d c" style="left:-167.00px;top:2.04px">None</div></div><div class="k" style="left:1128px;top:361px;width:66px"><div class="d c" style="left:-167.00px;top:2.04px">Yes</div></div><div class="k" style="left:1195px;top:361px;width:66px"><div class="d c" style="left:-167.00px;top:2.04px">None</div></div><div class="k" style="left:1262px;top:361px;width:66px"><div class="d c" style="left:-167.00px;top:2.04px">Yes</div></div><div class="k" style="left:1329px;top:361px;width:29px"><div class="d c" style="left:-165.50px;top:2.04px">None</div></div><div class="t" style="left:0px;width:30px;text-align:center;top:378.07px;font-size:7px;line-height:7px;color:#5a5a5a">5969</div><div style="left:0px;top:388px;width:30px;height:1px;background:#c7c7c7"></div><div style="left:31px;top:388px;width:1327px;height:1px;background:#e2e3e3"></div><div class="k" style="left:31px;top:375px;width:74px"><div class="d r" style="left:-327.6px;width:400px;top:2.04px">2025-10-20 9:20</div></div><div class="k" style="left:106px;top:375px;width:116px"><div class="d c" style="left:-142.00px;top:2.04px">Allyza Juls Corpuz</div></div><div class="k" style="left:227px;top:375px;width:56px"><div class="d c" style="left:-172.00px;top:2.04px">T-1</div></div><div class="k" style="left:284px;top:375px;width:83px"><div class="d c" style="left:-158.50px;top:2.04px">Germilyn Anne Galera</div></div><div class="k" style="left:368px;top:375px;width:68px"><div class="d c" style="left:-166.00px;top:2.04px">22035221</div></div><div class="k" style="left:437px;top:375px;width:66px"><div class="d c" style="left:-167.00px;top:2.04px">2025-10-19</div></div><div class="k" style="left:504px;top:375px;width:66px"><div class="d c" style="left:-167.00px;top:2.04px">New</div></div><div class="k" style="left:571px;top:375px;width:66px"><div class="d c" style="left:-167.00px;top:2.04px">Non-UGC</div></div><div class="k" style="left:638px;top:375px;width:66px"><div class="d c" style="left:-167.00px;top:2.04px">Track audio</div></div><div class="k" style="left:860px;top:375px;width:66px"><div class="d c" style="left:-167.00px;top:2.04px">None</div></div><div class="k" style="left:927px;top:375px;width:66px"><div class="d c" style="left:-167.00px;top:2.04px">None</div></div><div class="k" style="left:994px;top:375px;width:66px"><div class="d c" style="left:-167.00px;top:2.04px">Yes</div></div><div class="k" style="left:1061px;top:375px;width:66px"><div class="d c" style="left:-167.00px;top:2.04px">None</div></div><div class="k" style="left:1128px;top:375px;width:66px"><div class="d c" style="left:-167.00px;top:2.04px">Yes</div></div><div class="k" style="left:1195px;top:375px;width:66px"><div class="d c" style="left:-167.00px;top:2.04px">None</div></div><div class="k" style="left:1262px;top:375px;width:66px"><div class="d c" style="left:-167.00px;top:2.04px">Yes</div></div><div class="k" style="left:1329px;top:375px;width:29px"><div class="d c" style="left:-165.50px;top:2.04px">None</div></div><div class="t" style="left:0px;width:30px;text-align:center;top:392.07px;font-size:7px;line-height:7px;color:#5a5a5a">5970</div><div style="left:0px;top:402px;width:30px;height:1px;background:#c7c7c7"></div><div style="left:31px;top:402px;width:1327px;height:1px;background:#e2e3e3"></div><div class="k" style="left:31px;top:389px;width:74px"><div class="d r" style="left:-327.6px;width:400px;top:2.04px">2025-10-20 9:29</div></div><div class="k" style="left:106px;top:389px;width:116px"><div class="d c" style="left:-142.00px;top:2.04px">Allyza Juls Corpuz</div></div><div class="k" style="left:227px;top:389px;width:56px"><div class="d c" style="left:-172.00px;top:2.04px">T-1</div></div><div class="k" style="left:284px;top:389px;width:83px"><div class="d c" style="left:-158.50px;top:2.04px">Germilyn Anne Galera</div></div><div class="k" style="left:368px;top:389px;width:68px"><div class="d c" style="left:-166.00px;top:2.04px">22029561</div></div><div class="k" style="left:437px;top:389px;width:66px"><div class="d c" style="left:-167.00px;top:2.04px">2025-10-19</div></div><div class="k" style="left:504px;top:389px;width:66px"><div class="d c" style="left:-167.00px;top:2.04px">New</div></div><div class="k" style="left:571px;top:389px;width:66px"><div class="d c" style="left:-167.00px;top:2.04px">Non-UGC</div></div><div class="k" style="left:638px;top:389px;width:66px"><div class="d c" style="left:-167.00px;top:2.04px">Album audio</div></div><div class="k" style="left:860px;top:389px;width:66px"><div class="d c" style="left:-167.00px;top:2.04px">None</div></div><div class="k" style="left:927px;top:389px;width:66px"><div class="d c" style="left:-167.00px;top:2.04px">None</div></div><div class="k" style="left:994px;top:389px;width:66px"><div class="d c" style="left:-167.00px;top:2.04px">Yes</div></div><div class="k" style="left:1061px;top:389px;width:66px"><div class="d c" style="left:-167.00px;top:2.04px">None</div></div><div class="k" style="left:1128px;top:389px;width:66px"><div class="d c" style="left:-167.00px;top:2.04px">Yes</div></div><div class="k" style="left:1195px;top:389px;width:66px"><div class="d c" style="left:-167.00px;top:2.04px">None</div></div><div class="k" style="left:1262px;top:389px;width:66px"><div class="d c" style="left:-167.00px;top:2.04px">Yes</div></div><div class="k" style="left:1329px;top:389px;width:29px"><div class="d c" style="left:-165.50px;top:2.04px">None</div></div><div class="t" style="left:0px;width:30px;text-align:center;top:406.07px;font-size:7px;line-height:7px;color:#5a5a5a">5971</div><div style="left:0px;top:416px;width:30px;height:1px;background:#c7c7c7"></div><div style="left:31px;top:416px;width:1327px;height:1px;background:#e2e3e3"></div><div class="k" style="left:31px;top:403px;width:74px"><div class="d r" style="left:-327.6px;width:400px;top:2.04px">2025-10-20 9:45</div></div><div class="k" style="left:106px;top:403px;width:116px"><div class="d c" style="left:-142.00px;top:2.04px">Marlon Olbes</div></div><div class="k" style="left:227px;top:403px;width:56px"><div class="d c" style="left:-172.00px;top:2.04px">T-1</div></div><div class="k" style="left:284px;top:403px;width:83px"><div class="d c" style="left:-158.50px;top:2.04px">Germilyn Anne Galera</div></div><div class="k" style="left:368px;top:403px;width:68px"><div class="d c" style="left:-166.00px;top:2.04px">22035250</div></div><div class="k" style="left:437px;top:403px;width:66px"><div class="d c" style="left:-167.00px;top:2.04px">2025-10-19</div></div><div class="k" style="left:504px;top:403px;width:66px"><div class="d c" style="left:-167.00px;top:2.04px">New</div></div><div class="k" style="left:571px;top:403px;width:66px"><div class="d c" style="left:-167.00px;top:2.04px">Non-UGC</div></div><div class="k" style="left:638px;top:403px;width:66px"><div class="d c" style="left:-167.00px;top:2.04px">Album audio</div></div><div class="k" style="left:860px;top:403px;width:66px"><div class="d c" style="left:-167.00px;top:2.04px">None</div></div><div class="k" style="left:927px;top:403px;width:66px"><div class="d c" style="left:-167.00px;top:2.04px">None</div></div><div class="k" style="left:994px;top:403px;width:66px"><div class="d c" style="left:-167.00px;top:2.04px">Yes</div></div><div class="k" style="left:1061px;top:403px;width:66px"><div class="d c" style="left:-167.00px;top:2.04px">None</div></div><div class="k" style="left:1128px;top:403px;width:66px"><div class="d c" style="left:-167.00px;top:2.04px">Yes</div></div><div class="k" style="left:1195px;top:403px;width:66px"><div class="d c" style="left:-167.00px;top:2.04px">None</div></div><div class="k" style="left:1262px;top:403px;width:66px"><div class="d c" style="left:-167.00px;top:2.04px">Yes</div></div><div class="k" style="left:1329px;top:403px;width:29px"><div class="d c" style="left:-165.50px;top:2.04px">None</div></div><div class="t" style="left:0px;width:30px;text-align:center;top:420.07px;font-size:7px;line-height:7px;color:#5a5a5a">5972</div><div style="left:0px;top:430px;width:30px;height:1px;background:#c7c7c7"></div><div style="left:31px;top:430px;width:1327px;height:1px;background:#e2e3e3"></div><div class="k" style="left:31px;top:417px;width:74px"><div class="d r" style="left:-327.6px;width:400px;top:2.04px">2025-10-20 10:13</div></div><div class="k" style="left:106px;top:417px;width:116px"><div class="d c" style="left:-142.00px;top:2.04px">Marlon Olbes</div></div><div class="k" style="left:227px;top:417px;width:56px"><div class="d c" style="left:-172.00px;top:2.04px">T-1</div></div><div class="k" style="left:284px;top:417px;width:83px"><div class="d c" style="left:-158.50px;top:2.04px">Germilyn Anne Galera</div></div><div class="k" style="left:368px;top:417px;width:68px"><div class="d c" style="left:-166.00px;top:2.04px">22038033</div></div><div class="k" style="left:437px;top:417px;width:66px"><div class="d c" style="left:-167.00px;top:2.04px">2025-10-20</div></div><div class="k" style="left:504px;top:417px;width:66px"><div class="d c" style="left:-167.00px;top:2.04px">New</div></div><div class="k" style="left:571px;top:417px;width:66px"><div class="d c" style="left:-167.00px;top:2.04px">Non-UGC</div></div><div class="k" style="left:638px;top:417px;width:66px"><div class="d c" style="left:-167.00px;top:2.04px">Track audio</div></div><div class="k" style="left:860px;top:417px;width:66px"><div class="d c" style="left:-167.00px;top:2.04px">None</div></div><div class="k" style="left:927px;top:417px;width:66px"><div class="d c" style="left:-167.00px;top:2.04px">None</div></div><div class="k" style="left:994px;top:417px;width:66px"><div class="d c" style="left:-167.00px;top:2.04px">Yes</div></div><div class="k" style="left:1061px;top:417px;width:66px"><div class="d c" style="left:-167.00px;top:2.04px">None</div></div><div class="k" style="left:1128px;top:417px;width:66px"><div class="d c" style="left:-167.00px;top:2.04px">Yes</div></div><div class="k" style="left:1195px;top:417px;width:66px"><div class="d c" style="left:-167.00px;top:2.04px">None</div></div><div class="k" style="left:1262px;top:417px;width:66px"><div class="d c" style="left:-167.00px;top:2.04px">Yes</div></div><div class="k" style="left:1329px;top:417px;width:29px"><div class="d c" style="left:-165.50px;top:2.04px">None</div></div><div class="t" style="left:0px;width:30px;text-align:center;top:434.07px;font-size:7px;line-height:7px;color:#5a5a5a">5973</div><div style="left:0px;top:444px;width:30px;height:1px;background:#c7c7c7"></div><div style="left:31px;top:444px;width:1327px;height:1px;background:#e2e3e3"></div><div class="k" style="left:31px;top:431px;width:74px"><div class="d r" style="left:-327.6px;width:400px;top:2.04px">2025-10-20 11:11</div></div><div class="k" style="left:106px;top:431px;width:116px"><div class="d c" style="left:-142.00px;top:2.04px">Jayson Cortez</div></div><div class="k" style="left:227px;top:431px;width:56px"><div class="d c" style="left:-172.00px;top:2.04px">T-2</div></div><div class="k" style="left:284px;top:431px;width:83px"><div class="d c" style="left:-158.50px;top:2.04px">Germilyn Anne Galera</div></div><div class="k" style="left:368px;top:431px;width:68px"><div class="d c" style="left:-166.00px;top:2.04px">22039629</div></div><div class="k" style="left:437px;top:431px;width:66px"><div class="d c" style="left:-167.00px;top:2.04px">2025-10-19</div></div><div class="k" style="left:504px;top:431px;width:66px"><div class="d c" style="left:-167.00px;top:2.04px">New</div></div><div class="k" style="left:571px;top:431px;width:66px"><div class="d c" style="left:-167.00px;top:2.04px">Non-UGC</div></div><div class="k" style="left:638px;top:431px;width:66px"><div class="d c" style="left:-167.00px;top:2.04px">Track audio</div></div><div class="k" style="left:860px;top:431px;width:66px"><div class="d c" style="left:-167.00px;top:2.04px">None</div></div><div class="k" style="left:927px;top:431px;width:66px"><div class="d c" style="left:-167.00px;top:2.04px">None</div></div><div class="k" style="left:994px;top:431px;width:66px"><div class="d c" style="left:-167.00px;top:2.04px">Yes</div></div><div class="k" style="left:1061px;top:431px;width:66px"><div class="d c" style="left:-167.00px;top:2.04px">None</div></div><div class="k" style="left:1128px;top:431px;width:66px"><div class="d c" style="left:-167.00px;top:2.04px">Yes</div></div><div class="k" style="left:1195px;top:431px;width:66px"><div class="d c" style="left:-167.00px;top:2.04px">None</div></div><div class="k" style="left:1262px;top:431px;width:66px"><div class="d c" style="left:-167.00px;top:2.04px">N/A</div></div><div class="k" style="left:1329px;top:431px;width:29px"><div class="d c" style="left:-165.50px;top:2.04px">None</div></div><div class="t" style="left:0px;width:30px;text-align:center;top:448.07px;font-size:7px;line-height:7px;color:#5a5a5a">5974</div><div style="left:0px;top:458px;width:30px;height:1px;background:#c7c7c7"></div><div style="left:31px;top:458px;width:1327px;height:1px;background:#e2e3e3"></div><div class="k" style="left:31px;top:445px;width:74px"><div class="d r" style="left:-327.6px;width:400px;top:2.04px">2025-10-20 11:21</div></div><div class="k" style="left:106px;top:445px;width:116px"><div class="d c" style="left:-142.00px;top:2.04px">Jayson Cortez</div></div><div class="k" style="left:227px;top:445px;width:56px"><div class="d c" style="left:-172.00px;top:2.04px">T-2</div></div><div class="k" style="left:284px;top:445px;width:83px"><div class="d c" style="left:-158.50px;top:2.04px">Germilyn Anne Galera</div></div><div class="k" style="left:368px;top:445px;width:68px"><div class="d c" style="left:-166.00px;top:2.04px">22041740</div></div><div class="k" style="left:437px;top:445px;width:66px"><div class="d c" style="left:-167.00px;top:2.04px">2025-10-20</div></div><div class="k" style="left:504px;top:445px;width:66px"><div class="d c" style="left:-167.00px;top:2.04px">Provider</div></div><div class="k" style="left:571px;top:445px;width:66px"><div class="d c" style="left:-167.00px;top:2.04px">UGC</div></div><div class="k" style="left:638px;top:445px;width:66px"><div class="d c" style="left:-167.00px;top:2.04px">Podcast episode</div></div><div class="k" style="left:860px;top:445px;width:66px"><div class="d c" style="left:-167.00px;top:2.04px">None</div></div><div class="k" style="left:927px;top:445px;width:66px"><div class="d c" style="left:-167.00px;top:2.04px">None</div></div><div class="k" style="left:994px;top:445px;width:66px"><div class="d c" style="left:-167.00px;top:2.04px">Yes</div></div><div class="k" style="left:1061px;top:445px;width:66px"><div class="d c" style="left:-167.00px;top:2.04px">None</div></div><div class="k" style="left:1128px;top:445px;width:66px"><div class="d c" style="left:-167.00px;top:2.04px">Yes</div></div><div class="k" style="left:1195px;top:445px;width:66px"><div class="d c" style="left:-167.00px;top:2.04px">None</div></div><div class="k" style="left:1262px;top:445px;width:66px"><div class="d c" style="left:-167.00px;top:2.04px">Yes</div></div><div class="k" style="left:1329px;top:445px;width:29px"><div class="d c" style="left:-165.50px;top:2.04px">None</div></div><div class="t" style="left:0px;width:30px;text-align:center;top:462.07px;font-size:7px;line-height:7px;color:#5a5a5a">5975</div><div style="left:0px;top:472px;width:30px;height:1px;background:#c7c7c7"></div><div style="left:31px;top:472px;width:1327px;height:1px;background:#e2e3e3"></div><div class="k" style="left:31px;top:459px;width:74px"><div class="d r" style="left:-327.6px;width:400px;top:2.04px">2025-10-20 11:48</div></div><div class="k" style="left:106px;top:459px;width:116px"><div class="d c" style="left:-142.00px;top:2.04px">Kaye Mopon</div></div><div class="k" style="left:227px;top:459px;width:56px"><div class="d c" style="left:-172.00px;top:2.04px">T-2</div></div><div class="k" style="left:284px;top:459px;width:83px"><div class="d c" style="left:-158.50px;top:2.04px">Germilyn Anne Galera</div></div><div class="k" style="left:368px;top:459px;width:68px"><div class="d c" style="left:-166.00px;top:2.04px">22040426</div></div><div class="k" style="left:437px;top:459px;width:66px"><div class="d c" style="left:-167.00px;top:2.04px">2025-10-19</div></div><div class="k" style="left:504px;top:459px;width:66px"><div class="d c" style="left:-167.00px;top:2.04px">Provider</div></div><div class="k" style="left:571px;top:459px;width:66px"><div class="d c" style="left:-167.00px;top:2.04px">UGC</div></div><div class="k" style="left:638px;top:459px;width:66px"><div class="d c" style="left:-167.00px;top:2.04px">Podcast episode</div></div><div class="k" style="left:860px;top:459px;width:66px"><div class="d c" style="left:-167.00px;top:2.04px">None</div></div><div class="k" style="left:927px;top:459px;width:66px"><div class="d c" style="left:-167.00px;top:2.04px">None</div></div><div class="k" style="left:994px;top:459px;width:66px"><div class="d c" style="left:-167.00px;top:2.04px">Yes</div></div><div class="k" style="left:1061px;top:459px;width:66px"><div class="d c" style="left:-167.00px;top:2.04px">None</div></div><div class="k" style="left:1128px;top:459px;width:66px"><div class="d c" style="left:-167.00px;top:2.04px">Yes</div></div><div class="k" style="left:1195px;top:459px;width:66px"><div class="d c" style="left:-167.00px;top:2.04px">None</div></div><div class="k" style="left:1262px;top:459px;width:66px"><div class="d c" style="left:-167.00px;top:2.04px">Yes</div></div><div class="k" style="left:1329px;top:459px;width:29px"><div class="d c" style="left:-165.50px;top:2.04px">None</div></div><div class="t" style="left:0px;width:30px;text-align:center;top:476.07px;font-size:7px;line-height:7px;color:#5a5a5a">5976</div><div style="left:0px;top:486px;width:30px;height:1px;background:#c7c7c7"></div><div style="left:31px;top:486px;width:1327px;height:1px;background:#e2e3e3"></div><div class="k" style="left:31px;top:473px;width:74px"><div class="d r" style="left:-327.6px;width:400px;top:2.04px">2025-10-20 12:19</div></div><div class="k" style="left:106px;top:473px;width:116px"><div class="d c" style="left:-142.00px;top:2.04px">Kaye Mopon</div></div><div class="k" style="left:227px;top:473px;width:56px"><div class="d c" style="left:-172.00px;top:2.04px">T-2</div></div><div class="k" style="left:284px;top:473px;width:83px"><div class="d c" style="left:-158.50px;top:2.04px">Germilyn Anne Galera</div></div><div class="k" style="left:368px;top:473px;width:68px"><div class="d c" style="left:-166.00px;top:2.04px">21979367</div></div><div class="k" style="left:437px;top:473px;width:66px"><div class="d c" style="left:-167.00px;top:2.04px">2025-10-20</div></div><div class="k" style="left:504px;top:473px;width:66px"><div class="d c" style="left:-167.00px;top:2.04px">Provider</div></div><div class="k" style="left:571px;top:473px;width:66px"><div class="d c" style="left:-167.00px;top:2.04px">Non-UGC</div></div><div class="k" style="left:638px;top:473px;width:66px"><div class="d c" style="left:-167.00px;top:2.04px">Track audio</div></div><div class="k" style="left:860px;top:473px;width:66px"><div class="d c" style="left:-167.00px;top:2.04px">None</div></div><div class="k" style="left:927px;top:473px;width:66px"><div class="d c" style="left:-167.00px;top:2.04px">None</div></div><div class="k" style="left:994px;top:473px;width:66px"><div class="d c" style="left:-167.00px;top:2.04px">Yes</div></div><div class="k" style="left:1061px;top:473px;width:66px"><div class="d c" style="left:-167.00px;top:2.04px">None</div></div><div class="k" style="left:1128px;top:473px;width:66px"><div class="d c" style="left:-167.00px;top:2.04px">Yes</div></div><div class="k" style="left:1195px;top:473px;width:66px"><div class="d c" style="left:-167.00px;top:2.04px">None</div></div><div class="k" style="left:1262px;top:473px;width:66px"><div class="d c" style="left:-167.00px;top:2.04px">N/A</div></div><div class="k" style="left:1329px;top:473px;width:29px"><div class="d c" style="left:-165.50px;top:2.04px">None</div></div><div class="t" style="left:0px;width:30px;text-align:center;top:490.07px;font-size:7px;line-height:7px;color:#5a5a5a">5977</div><div style="left:0px;top:500px;width:30px;height:1px;background:#c7c7c7"></div><div style="left:31px;top:500px;width:1327px;height:1px;background:#e2e3e3"></div><div class="k" style="left:31px;top:487px;width:74px"><div class="d r" style="left:-327.6px;width:400px;top:2.04px">2025-10-20 13:04</div></div><div class="k" style="left:106px;top:487px;width:116px"><div class="d c" style="left:-142.00px;top:2.04px">Kevin John Fuentes</div></div><div class="k" style="left:227px;top:487px;width:56px"><div class="d c" style="left:-172.00px;top:2.04px">T-2</div></div><div class="k" style="left:284px;top:487px;width:83px"><div class="d c" style="left:-158.50px;top:2.04px">Germilyn Anne Galera</div></div><div class="k" style="left:368px;top:487px;width:68px"><div class="d c" style="left:-166.00px;top:2.04px">22029445</div></div><div class="k" style="left:437px;top:487px;width:66px"><div class="d c" style="left:-167.00px;top:2.04px">2025-10-19</div></div><div class="k" style="left:504px;top:487px;width:66px"><div class="d c" style="left:-167.00px;top:2.04px">New</div></div><div class="k" style="left:571px;top:487px;width:66px"><div class="d c" style="left:-167.00px;top:2.04px">Non-UGC</div></div><div class="k" style="left:638px;top:487px;width:66px"><div class="d c" style="left:-167.00px;top:2.04px">Track audio</div></div><div class="k" style="left:860px;top:487px;width:66px"><div class="d c" style="left:-167.00px;top:2.04px">None</div></div><div class="k" style="left:927px;top:487px;width:66px"><div class="d c" style="left:-167.00px;top:2.04px">None</div></div><div class="k" style="left:994px;top:487px;width:66px"><div class="d c" style="left:-167.00px;top:2.04px">Yes</div></div><div class="k" style="left:1061px;top:487px;width:66px"><div class="d c" style="left:-167.00px;top:2.04px">None</div></div><div class="k" style="left:1128px;top:487px;width:66px"><div class="d c" style="left:-167.00px;top:2.04px">Yes</div></div><div class="k" style="left:1195px;top:487px;width:66px"><div class="d c" style="left:-167.00px;top:2.04px">None</div></div><div class="k" style="left:1262px;top:487px;width:66px"><div class="d c" style="left:-167.00px;top:2.04px">Yes</div></div><div class="k" style="left:1329px;top:487px;width:29px"><div class="d c" style="left:-165.50px;top:2.04px">None</div></div><div class="t" style="left:0px;width:30px;text-align:center;top:504.07px;font-size:7px;line-height:7px;color:#5a5a5a">5978</div><div style="left:0px;top:514px;width:30px;height:1px;background:#c7c7c7"></div><div style="left:31px;top:514px;width:1327px;height:1px;background:#e2e3e3"></div><div class="k" style="left:31px;top:501px;width:74px"><div class="d r" style="left:-327.6px;width:400px;top:2.04px">2025-10-20 13:51</div></div><div class="k" style="left:106px;top:501px;width:116px"><div class="d c" style="left:-142.00px;top:2.04px">Kevin John Fuentes</div></div><div class="k" style="left:227px;top:501px;width:56px"><div class="d c" style="left:-172.00px;top:2.04px">T-2</div></div><div class="k" style="left:284px;top:501px;width:83px"><div class="d c" style="left:-158.50px;top:2.04px">Germilyn Anne Galera</div></div><div class="k" style="left:368px;top:501px;width:68px"><div class="d c" style="left:-166.00px;top:2.04px">22042051</div></div><div class="k" style="left:437px;top:501px;width:66px"><div class="d c" style="left:-167.00px;top:2.04px">2025-10-20</div></div><div class="k" style="left:504px;top:501px;width:66px"><div class="d c" style="left:-167.00px;top:2.04px">Provider</div></div><div class="k" style="left:571px;top:501px;width:66px"><div class="d c" style="left:-167.00px;top:2.04px">Non-UGC</div></div><div class="k" style="left:638px;top:501px;width:66px"><div class="d c" style="left:-167.00px;top:2.04px">Track audio</div></div><div class="k" style="left:860px;top:501px;width:66px"><div class="d c" style="left:-167.00px;top:2.04px">None</div></div><div class="k" style="left:927px;top:501px;width:66px"><div class="d c" style="left:-167.00px;top:2.04px">None</div></div><div class="k" style="left:994px;top:501px;width:66px"><div class="d c" style="left:-167.00px;top:2.04px">Yes</div></div><div class="k" style="left:1061px;top:501px;width:66px"><div class="d c" style="left:-167.00px;top:2.04px">None</div></div><div class="k" style="left:1128px;top:501px;width:66px"><div class="d c" style="left:-167.00px;top:2.04px">Yes</div></div><div class="k" style="left:1195px;top:501px;width:66px"><div class="d c" style="left:-167.00px;top:2.04px">None</div></div><div class="k" style="left:1262px;top:501px;width:66px"><div class="d c" style="left:-167.00px;top:2.04px">N/A</div></div><div class="k" style="left:1329px;top:501px;width:29px"><div class="d c" style="left:-165.50px;top:2.04px">None</div></div><div class="t" style="left:0px;width:30px;text-align:center;top:518.07px;font-size:7px;line-height:7px;color:#5a5a5a">5979</div><div style="left:0px;top:528px;width:30px;height:1px;background:#c7c7c7"></div><div style="left:31px;top:528px;width:1327px;height:1px;background:#e2e3e3"></div><div class="k" style="left:31px;top:515px;width:74px"><div class="d r" style="left:-327.6px;width:400px;top:2.04px">2025-10-20 14:06</div></div><div class="k" style="left:106px;top:515px;width:116px"><div class="d c" style="left:-142.00px;top:2.04px">Kevin John Fuentes</div></div><div class="k" style="left:227px;top:515px;width:56px"><div class="d c" style="left:-172.00px;top:2.04px">T-2</div></div><div class="k" style="left:284px;top:515px;width:83px"><div class="d c" style="left:-158.50px;top:2.04px">Germilyn Anne Galera</div></div><div class="k" style="left:368px;top:515px;width:68px"><div class="d c" style="left:-166.00px;top:2.04px">22010776</div></div><div class="k" style="left:437px;top:515px;width:66px"><div class="d c" style="left:-167.00px;top:2.04px">2025-10-20</div></div><div class="k" style="left:504px;top:515px;width:66px"><div class="d c" style="left:-167.00px;top:2.04px">Provider</div></div><div class="k" style="left:571px;top:515px;width:66px"><div class="d c" style="left:-167.00px;top:2.04px">Non-UGC</div></div><div class="k" style="left:638px;top:515px;width:66px"><div class="d c" style="left:-167.00px;top:2.04px">Track audio</div></div><div class="k" style="left:860px;top:515px;width:66px"><div class="d c" style="left:-167.00px;top:2.04px">None</div></div><div class="k" style="left:927px;top:515px;width:66px"><div class="d c" style="left:-167.00px;top:2.04px">None</div></div><div class="k" style="left:994px;top:515px;width:66px"><div class="d c" style="left:-167.00px;top:2.04px">Yes</div></div><div class="k" style="left:1061px;top:515px;width:66px"><div class="d c" style="left:-167.00px;top:2.04px">None</div></div><div class="k" style="left:1128px;top:515px;width:66px"><div class="d c" style="left:-167.00px;top:2.04px">Yes</div></div><div class="k" style="left:1195px;top:515px;width:66px"><div class="d c" style="left:-167.00px;top:2.04px">None</div></div><div class="k" style="left:1262px;top:515px;width:66px"><div class="d c" style="left:-167.00px;top:2.04px">N/A</div></div><div class="k" style="left:1329px;top:515px;width:29px"><div class="d c" style="left:-165.50px;top:2.04px">None</div></div><div class="t" style="left:0px;width:30px;text-align:center;top:532.07px;font-size:7px;line-height:7px;color:#5a5a5a">5980</div><div style="left:0px;top:542px;width:30px;height:1px;background:#c7c7c7"></div><div style="left:31px;top:542px;width:1327px;height:1px;background:#e2e3e3"></div><div class="k" style="left:31px;top:529px;width:74px"><div class="d r" style="left:-327.6px;width:400px;top:2.04px">2025-10-20 14:24</div></div><div class="k" style="left:106px;top:529px;width:116px"><div class="d c" style="left:-142.00px;top:2.04px">Jayson Cortez</div></div><div class="k" style="left:227px;top:529px;width:56px"><div class="d c" style="left:-172.00px;top:2.04px">T-2</div></div><div class="k" style="left:284px;top:529px;width:83px"><div class="d c" style="left:-158.50px;top:2.04px">Germilyn Anne Galera</div></div><div class="k" style="left:368px;top:529px;width:68px"><div class="d c" style="left:-166.00px;top:2.04px">22020137</div></div><div class="k" style="left:437px;top:529px;width:66px"><div class="d c" style="left:-167.00px;top:2.04px">2025-10-20</div></div><div class="k" style="left:504px;top:529px;width:66px"><div class="d c" style="left:-167.00px;top:2.04px">Claimant</div></div><div class="k" style="left:571px;top:529px;width:66px"><div class="d c" style="left:-167.00px;top:2.04px">Non-UGC</div></div><div class="k" style="left:638px;top:529px;width:66px"><div class="d c" style="left:-167.00px;top:2.04px">Album audio</div></div><div class="k" style="left:860px;top:529px;width:66px"><div class="d c" style="left:-167.00px;top:2.04px">None</div></div><div class="k" style="left:927px;top:529px;width:66px"><div class="d c" style="left:-167.00px;top:2.04px">None</div></div><div class="k" style="left:994px;top:529px;width:66px"><div class="d c" style="left:-167.00px;top:2.04px">Yes</div></div><div class="k" style="left:1061px;top:529px;width:66px"><div class="d c" style="left:-167.00px;top:2.04px">None</div></div><div class="k" style="left:1128px;top:529px;width:66px"><div class="d c" style="left:-167.00px;top:2.04px">Yes</div></div><div class="k" style="left:1195px;top:529px;width:66px"><div class="d c" style="left:-167.00px;top:2.04px">None</div></div><div class="k" style="left:1262px;top:529px;width:66px"><div class="d c" style="left:-167.00px;top:2.04px">Yes</div></div><div class="k" style="left:1329px;top:529px;width:29px"><div class="d c" style="left:-165.50px;top:2.04px">None</div></div><div class="t" style="left:0px;width:30px;text-align:center;top:546.07px;font-size:7px;line-height:7px;color:#5a5a5a">5981</div><div style="left:0px;top:556px;width:30px;height:1px;background:#c7c7c7"></div><div style="left:31px;top:556px;width:1327px;height:1px;background:#e2e3e3"></div><div class="k" style="left:31px;top:543px;width:74px"><div class="d r" style="left:-327.6px;width:400px;top:2.04px">2025-10-20 14:31</div></div><div class="k" style="left:106px;top:543px;width:116px"><div class="d c" style="left:-142.00px;top:2.04px">Kaye Mopon</div></div><div class="k" style="left:227px;top:543px;width:56px"><div class="d c" style="left:-172.00px;top:2.04px">T-2</div></div><div class="k" style="left:284px;top:543px;width:83px"><div class="d c" style="left:-158.50px;top:2.04px">Germilyn Anne Galera</div></div><div class="k" style="left:368px;top:543px;width:68px"><div class="d c" style="left:-166.00px;top:2.04px">21247077</div></div><div class="k" style="left:437px;top:543px;width:66px"><div class="d c" style="left:-167.00px;top:2.04px">2025-10-20</div></div><div class="k" style="left:504px;top:543px;width:66px"><div class="d c" style="left:-167.00px;top:2.04px">Provider</div></div><div class="k" style="left:571px;top:543px;width:66px"><div class="d c" style="left:-167.00px;top:2.04px">Non-UGC</div></div><div class="k" style="left:638px;top:543px;width:66px"><div class="d c" style="left:-167.00px;top:2.04px">Track audio</div></div><div class="k" style="left:860px;top:543px;width:66px"><div class="d c" style="left:-167.00px;top:2.04px">None</div></div><div class="k" style="left:927px;top:543px;width:66px"><div class="d c" style="left:-167.00px;top:2.04px">None</div></div><div class="k" style="left:994px;top:543px;width:66px"><div class="d c" style="left:-167.00px;top:2.04px">Yes</div></div><div class="k" style="left:1061px;top:543px;width:66px"><div class="d c" style="left:-167.00px;top:2.04px">None</div></div><div class="k" style="left:1128px;top:543px;width:66px"><div class="d c" style="left:-167.00px;top:2.04px">Yes</div></div><div class="k" style="left:1195px;top:543px;width:66px"><div class="d c" style="left:-167.00px;top:2.04px">None</div></div><div class="k" style="left:1262px;top:543px;width:66px"><div class="d c" style="left:-167.00px;top:2.04px">Yes</div></div><div class="k" style="left:1329px;top:543px;width:29px"><div class="d c" style="left:-165.50px;top:2.04px">None</div></div><div class="t" style="left:0px;width:30px;text-align:center;top:560.07px;font-size:7px;line-height:7px;color:#5a5a5a">5982</div><div style="left:0px;top:570px;width:30px;height:1px;background:#c7c7c7"></div><div style="left:31px;top:570px;width:1327px;height:1px;background:#e2e3e3"></div><div class="k" style="left:31px;top:557px;width:74px"><div class="d r" style="left:-327.6px;width:400px;top:2.04px">2025-10-20 19:03</div></div><div class="k" style="left:106px;top:557px;width:116px"><div class="d c" style="left:-142.00px;top:2.04px">Khristine Sachiko Billones</div></div><div class="k" style="left:227px;top:557px;width:56px"><div class="d c" style="left:-172.00px;top:2.04px">T-1</div></div><div class="k" style="left:284px;top:557px;width:83px"><div class="d c" style="left:-158.50px;top:2.04px">Mark Lacton</div></div><div class="k" style="left:368px;top:557px;width:68px"><div class="d c" style="left:-166.00px;top:2.04px">22044852</div></div><div class="k" style="left:437px;top:557px;width:66px"><div class="d c" style="left:-167.00px;top:2.04px">2025-10-20</div></div><div class="k" style="left:504px;top:557px;width:66px"><div class="d c" style="left:-167.00px;top:2.04px">Provider</div></div><div class="k" style="left:571px;top:557px;width:66px"><div class="d c" style="left:-167.00px;top:2.04px">Non-UGC</div></div><div class="k" style="left:638px;top:557px;width:66px"><div class="d c" style="left:-167.00px;top:2.04px">Podcast episode</div></div><div class="k" style="left:860px;top:557px;width:66px"><div class="d c" style="left:-167.00px;top:2.04px">None</div></div><div class="k" style="left:927px;top:557px;width:66px"><div class="d c" style="left:-167.00px;top:2.04px">None</div></div><div class="k" style="left:994px;top:557px;width:66px"><div class="d c" style="left:-167.00px;top:2.04px">Yes</div></div><div class="k" style="left:1061px;top:557px;width:66px"><div class="d c" style="left:-167.00px;top:2.04px">None</div></div><div class="k" style="left:1128px;top:557px;width:66px"><div class="d c" style="left:-167.00px;top:2.04px">Yes</div></div><div class="k" style="left:1195px;top:557px;width:66px"><div class="d c" style="left:-167.00px;top:2.04px">None</div></div><div class="k" style="left:1262px;top:557px;width:66px"><div class="d c" style="left:-167.00px;top:2.04px">Yes</div></div><div class="k" style="left:1329px;top:557px;width:29px"><div class="d c" style="left:-165.50px;top:2.04px">None</div></div><div style="left:105px;top:179px;width:1px;height:391px;background:#e2e3e3"></div><div style="left:105px;top:119px;width:1px;height:57px;background:#0f4450"></div><div style="left:283px;top:179px;width:1px;height:391px;background:#e2e3e3"></div><div style="left:283px;top:119px;width:1px;height:57px;background:#0f4450"></div><div style="left:367px;top:179px;width:1px;height:391px;background:#e2e3e3"></div><div style="left:367px;top:119px;width:1px;height:57px;background:#0f4450"></div><div style="left:436px;top:179px;width:1px;height:391px;background:#e2e3e3"></div><div style="left:436px;top:119px;width:1px;height:57px;background:#0f4450"></div><div style="left:503px;top:179px;width:1px;height:391px;background:#e2e3e3"></div><div style="left:503px;top:119px;width:1px;height:57px;background:#0f4450"></div><div style="left:570px;top:179px;width:1px;height:391px;background:#e2e3e3"></div><div style="left:570px;top:119px;width:1px;height:57px;background:#0f4450"></div><div style="left:637px;top:179px;width:1px;height:391px;background:#e2e3e3"></div><div style="left:637px;top:119px;width:1px;height:57px;background:#0f4450"></div><div style="left:704px;top:179px;width:1px;height:391px;background:#e2e3e3"></div><div style="left:704px;top:119px;width:1px;height:57px;background:#0f4450"></div><div style="left:792px;top:179px;width:1px;height:391px;background:#e2e3e3"></div><div style="left:792px;top:119px;width:1px;height:57px;background:#0f4450"></div><div style="left:859px;top:179px;width:1px;height:391px;background:#e2e3e3"></div><div style="left:859px;top:119px;width:1px;height:57px;background:#0f4450"></div><div style="left:926px;top:179px;width:1px;height:391px;background:#e2e3e3"></div><div style="left:926px;top:119px;width:1px;height:57px;background:#0f4450"></div><div style="left:993px;top:179px;width:1px;height:391px;background:#e2e3e3"></div><div style="left:993px;top:119px;width:1px;height:57px;background:#0f4450"></div><div style="left:1060px;top:179px;width:1px;height:391px;background:#e2e3e3"></div><div style="left:1060px;top:119px;width:1px;height:57px;background:#0f4450"></div><div style="left:1127px;top:179px;width:1px;height:391px;background:#e2e3e3"></div><div style="left:1127px;top:119px;width:1px;height:57px;background:#0f4450"></div><div style="left:1194px;top:179px;width:1px;height:391px;background:#e2e3e3"></div><div style="left:1194px;top:119px;width:1px;height:57px;background:#0f4450"></div><div style="left:1261px;top:179px;width:1px;height:391px;background:#e2e3e3"></div><div style="left:1261px;top:119px;width:1px;height:57px;background:#0f4450"></div><div style="left:1328px;top:179px;width:1px;height:391px;background:#e2e3e3"></div><div style="left:1328px;top:119px;width:1px;height:57px;background:#0f4450"></div><div class="k" style="left:705px;top:179px;width:154px;background:#fff"><div class="d r" style="left:-287.4px;width:400px;top:2.04px">US_COPYRIGHT_COMPOSITION</div></div><div class="k" style="left:705px;top:193px;width:154px;background:#fff"><div class="d r" style="left:-273px;width:400px;top:2.04px">COPYRIGHT_SOUND_RECORDING</div></div><div class="k" style="left:705px;top:207px;width:154px;background:#fff"><div class="d r" style="left:-246.39999999999998px;width:400px;top:2.04px">NAIVE_RIGHTSHOLDER_PROCESS_VID</div></div><div class="k" style="left:705px;top:221px;width:154px;background:#fff"><div class="d r" style="left:-246.39999999999998px;width:400px;top:2.04px">NAIVE_RIGHTSHOLDER_PROCESS_VID</div></div><div class="k" style="left:705px;top:235px;width:154px;background:#fff"><div class="d r" style="left:-246.39999999999998px;width:400px;top:2.04px">NAIVE_RIGHTSHOLDER_PROCESS_VID</div></div><div class="k" style="left:705px;top:249px;width:154px;background:#fff"><div class="d r" style="left:-273px;width:400px;top:2.04px">COPYRIGHT_SOUND_RECORDING</div></div><div class="k" style="left:705px;top:263px;width:154px;background:#fff"><div class="d r" style="left:-287.4px;width:400px;top:2.04px">US_COPYRIGHT_COMPOSITION</div></div><div class="k" style="left:705px;top:277px;width:87px;background:#fff"><div class="d r" style="left:-273px;width:400px;top:2.04px">COPYRIGHT_SOUND_RECORDING</div></div><div style="left:792px;top:277px;width:1px;height:14px;background:#e2e3e3"></div><div class="k" style="left:705px;top:291px;width:154px;background:#fff"><div class="d r" style="left:-273px;width:400px;top:2.04px">COPYRIGHT_SOUND_RECORDING</div></div><div class="k" style="left:705px;top:305px;width:154px;background:#fff"><div class="d l" style="left:-18.77px;top:2.04px">NAIVE_RIGHTSHOLDER_PROCESS_MUSIC</div></div><div class="k" style="left:705px;top:319px;width:154px;background:#fff"><div class="d r" style="left:-273px;width:400px;top:2.04px">COPYRIGHT_SOUND_RECORDING</div></div><div class="k" style="left:705px;top:333px;width:154px;background:#fff"><div class="d r" style="left:-287.4px;width:400px;top:2.04px">US_COPYRIGHT_COMPOSITION</div></div><div class="k" style="left:705px;top:347px;width:154px;background:#fff"><div class="d r" style="left:-287.4px;width:400px;top:2.04px">US_COPYRIGHT_COMPOSITION</div></div><div class="k" style="left:705px;top:361px;width:154px;background:#fff"><div class="d r" style="left:-273px;width:400px;top:2.04px">COPYRIGHT_SOUND_RECORDING</div></div><div class="k" style="left:705px;top:375px;width:154px;background:#fff"><div class="d r" style="left:-287.4px;width:400px;top:2.04px">US_COPYRIGHT_COMPOSITION</div></div><div class="k" style="left:705px;top:389px;width:154px;background:#fff"><div class="d r" style="left:-273px;width:400px;top:2.04px">COPYRIGHT_SOUND_RECORDING</div></div><div class="k" style="left:705px;top:403px;width:154px;background:#fff"><div class="d r" style="left:-287.4px;width:400px;top:2.04px">US_COPYRIGHT_COMPOSITION</div></div><div class="k" style="left:705px;top:417px;width:154px;background:#fff"><div class="d r" style="left:-287.4px;width:400px;top:2.04px">US_COPYRIGHT_COMPOSITION</div></div><div class="k" style="left:705px;top:431px;width:154px;background:#fff"><div class="d r" style="left:-287.4px;width:400px;top:2.04px">US_COPYRIGHT_COMPOSITION</div></div><div class="k" style="left:705px;top:445px;width:154px;background:#fff"><div class="d r" style="left:-264.4px;width:400px;top:2.04px">US_PODCAST - BUSINESS_POLICY</div></div><div class="k" style="left:705px;top:459px;width:154px;background:#fff"><div class="d r" style="left:-264.4px;width:400px;top:2.04px">US_PODCAST - BUSINESS_POLICY</div></div><div class="k" style="left:705px;top:473px;width:154px;background:#fff"><div class="d r" style="left:-273px;width:400px;top:2.04px">COPYRIGHT_SOUND_RECORDING</div></div><div class="k" style="left:705px;top:487px;width:154px;background:#fff"><div class="d r" style="left:-273px;width:400px;top:2.04px">COPYRIGHT_SOUND_RECORDING</div></div><div class="k" style="left:705px;top:501px;width:154px;background:#fff"><div class="d r" style="left:-287.4px;width:400px;top:2.04px">US_COPYRIGHT_COMPOSITION</div></div><div class="k" style="left:705px;top:515px;width:154px;background:#fff"><div class="d r" style="left:-273px;width:400px;top:2.04px">COPYRIGHT_SOUND_RECORDING</div></div><div class="k" style="left:705px;top:529px;width:154px;background:#fff"><div class="d r" style="left:-273px;width:400px;top:2.04px">COPYRIGHT_SOUND_RECORDING</div></div><div class="k" style="left:705px;top:543px;width:154px;background:#fff"><div class="d r" style="left:-273px;width:400px;top:2.04px">COPYRIGHT_SOUND_RECORDING</div></div><div class="k" style="left:705px;top:557px;width:154px;background:#fff"><div class="d r" style="left:-264.4px;width:400px;top:2.04px">US_PODCAST - BUSINESS_POLICY</div></div><div style="left:30px;top:118px;width:1px;height:58px;background:#137333"></div><div style="left:30px;top:178px;width:1px;height:393px;background:#137333"></div><div style="left:105px;top:119px;width:1px;height:57px;background:#1a73e8"></div><div style="left:31px;top:175px;width:75px;height:1px;background:#1a73e8"></div><div style="left:103.8px;top:174px;width:5px;height:5px;border-radius:2.5px;background:#0b57d0;box-shadow:0 0 0 1px #fff"></div><div class="t" style="left:9.056000000000001px;top:87.92px;font-size:8.6px;line-height:8.6px;color:#1f1f1f;font-weight:normal;letter-spacing:-0.731px;">A1</div><svg style="position:absolute;left:57px;top:91px" width="7" height="4" viewBox="0 0 7 4"><path d="M0.8 0.6H6.2L3.5 3.6Z" fill="#444746"/></svg><div style="left:71px;top:87px;width:1px;height:12px;background:#c7c7c7;"></div><div class="t" style="left:79.6px;top:86px;font-family:'Liberation Serif',serif;font-style:italic;font-size:12px;line-height:12px;color:#8f8f8f;letter-spacing:-0.3px">fx</div><div class="t" style="left:95.164px;top:87.19px;font-size:8.4px;line-height:8.4px;color:#1f1f1f;font-weight:normal;letter-spacing:-0.132px;">Timestamp</div><div style="left:0px;top:571px;width:1365px;height:1px;background:#fff;"></div><div style="left:0px;top:572px;width:1365px;height:1px;background:#e1e1e1;"></div><div style="left:0px;top:573px;width:222px;height:8px;background:#f6f6f6;"></div><div style="left:222px;top:573px;width:4px;height:8px;background:#dde3ea;"></div><div style="left:226px;top:573px;width:1132px;height:8px;background:#fff;"></div><div style="left:228px;top:573px;width:503px;height:6px;border-radius:3px;background:#dadce0"></div><div style="left:1338px;top:573px;width:1px;height:8px;background:#e8e8e8;"></div><div style="left:1348px;top:573px;width:1px;height:8px;background:#e8e8e8;"></div><svg style="position:absolute;left:1338px;top:573px" width="20" height="8" viewBox="0 0 20 8"><path d="M6.2 2.2V5.8L4 4Z" fill="#b0b0b0"/><path d="M13.8 2.2V5.8L16 4Z" fill="#b0b0b0"/></svg><div style="left:0px;top:581px;width:1365px;height:1px;background:#dadce0;"></div><div style="left:1358px;top:103px;width:7px;height:470px;background:#fff;"></div><div style="left:1359px;top:103px;width:6px;height:15px;background:#f6f6f6;"></div><div style="left:1358px;top:103px;width:1px;height:478px;background:#e8e8e8;"></div><div style="left:1358px;top:176px;width:7px;height:3px;background:#cfcfcf;"></div><div style="left:1359px;top:180px;width:5px;height:16px;border-radius:2.5px;background:#dadce0"></div><div style="left:1359px;top:551px;width:6px;height:1px;background:#e8e8e8;"></div><div style="left:1359px;top:561px;width:6px;height:1px;background:#e8e8e8;"></div><svg style="position:absolute;left:1359px;top:551px" width="6" height="21" viewBox="0 0 6 21"><path d="M1 6.2H5L3 4Z" fill="#b0b0b0"/><path d="M1 14.8H5L3 17Z" fill="#b0b0b0"/></svg><div style="left:0px;top:582px;width:1365px;height:24px;background:#f9fbfd;"></div><div style="left:272px;top:582px;width:160px;height:24px;background:#e1e9f7;"></div><svg style="position:absolute;left:0px;top:582px" width="1365" height="24" viewBox="0 0 1365 24">
<path d="M41.6 9.4V16.2M38.2 12.8H45" stroke="#444746" stroke-width="1.2"/>
<path d="M64.2 9.9H73.7M64.2 12.8H73.7M64.2 15.7H73.7" stroke="#444746" stroke-width="1.1"/>
<path d="M126.1 11.2H130.7L128.4 13.6Z" fill="#444746"/>
<path d="M257.9 11.2H262.9L260.4 13.6Z" fill="#444746"/>
<path d="M418 11.2H423.8L420.9 13.6Z" fill="#0b57d0"/>
<path d="M547.9 11.2H553.1L550.5 13.6Z" fill="#444746"/>
<path d="M616.1 11.2H621.1L618.6 13.6Z" fill="#444746"/>
<path d="M685 11.2H690L687.5 13.6Z" fill="#444746"/>
<path d="M765 11.2H770L767.5 13.6Z" fill="#444746"/>
<path d="M849.2 11.2H853.6L851.4 13.6Z" fill="#444746"/>
<path d="M940.9 11.2H945.6L943.25 13.6Z" fill="#444746"/>
<path d="M1031.8 11.2H1036.9L1034.35 13.6Z" fill="#444746"/>
<path d="M1195.3 9.5H1203.3L1200.3 13.2V17L1198.3 16V13.2Z" fill="#444746"/>
<path d="M1349.4 10.9L1346.4 13.8L1349.4 16.7" stroke="#444746" stroke-width="1.2" fill="none"/>
</svg><div class="t" style="left:99.216px;top:590.07px;font-size:9.6px;line-height:9.6px;color:#444746;font-weight:500;letter-spacing:0.032px;">Raw</div><div class="t" style="left:148.716px;top:590.07px;font-size:9.6px;line-height:9.6px;color:#444746;font-weight:500;letter-spacing:0.366px;">2025 Raw (Privileged)</div><div class="t" style="left:440.316px;top:590.07px;font-size:9.6px;line-height:9.6px;color:#444746;font-weight:500;letter-spacing:0.372px;">OCT Markdown dump</div><div class="t" style="left:571.016px;top:590.07px;font-size:9.6px;line-height:9.6px;color:#444746;font-weight:500;letter-spacing:0.023px;">Jul Wk 1</div><div class="t" style="left:638.616px;top:590.07px;font-size:9.6px;line-height:9.6px;color:#444746;font-weight:500;letter-spacing:0.166px;">Jul Wk 2</div><div class="t" style="left:707.616px;top:590.07px;font-size:9.6px;line-height:9.6px;color:#444746;font-weight:500;letter-spacing:0.441px;">JUL tables</div><div class="t" style="left:787.4159999999999px;top:590.07px;font-size:9.6px;line-height:9.6px;color:#444746;font-weight:500;letter-spacing:0.472px;">MoM tables</div><div class="t" style="left:871.9159999999999px;top:590.07px;font-size:9.6px;line-height:9.6px;color:#444746;font-weight:500;letter-spacing:0.181px;">Column WoW</div><div class="t" style="left:963.216px;top:590.07px;font-size:9.6px;line-height:9.6px;color:#444746;font-weight:500;letter-spacing:0.343px;">Column MoM</div><div class="t" style="left:280.508px;top:590.00px;font-size:9.8px;line-height:9.8px;color:#0b57d0;font-weight:bold;letter-spacing:0.173px;">2025 Raw (new dashboard)</div><div class="t" style="left:1205.4279999999999px;top:591.13px;font-size:9.3px;line-height:9.3px;color:#5f6368;font-weight:normal;letter-spacing:-0.087px;">420 of 11,182 rows displayed</div><div style="left:0px;top:606px;width:1365px;height:4px;background:linear-gradient(90deg,#8a8a8a 0px,#8c8c8c 505px,#d6d6d6 575px,#d8d8d8 1365px);"></div><div style="left:0px;top:606px;width:1365px;height:1px;background:linear-gradient(90deg,#666 0px,#686868 505px,#acacac 575px,#b0b0b0 1365px);"></div>
</body></html>
